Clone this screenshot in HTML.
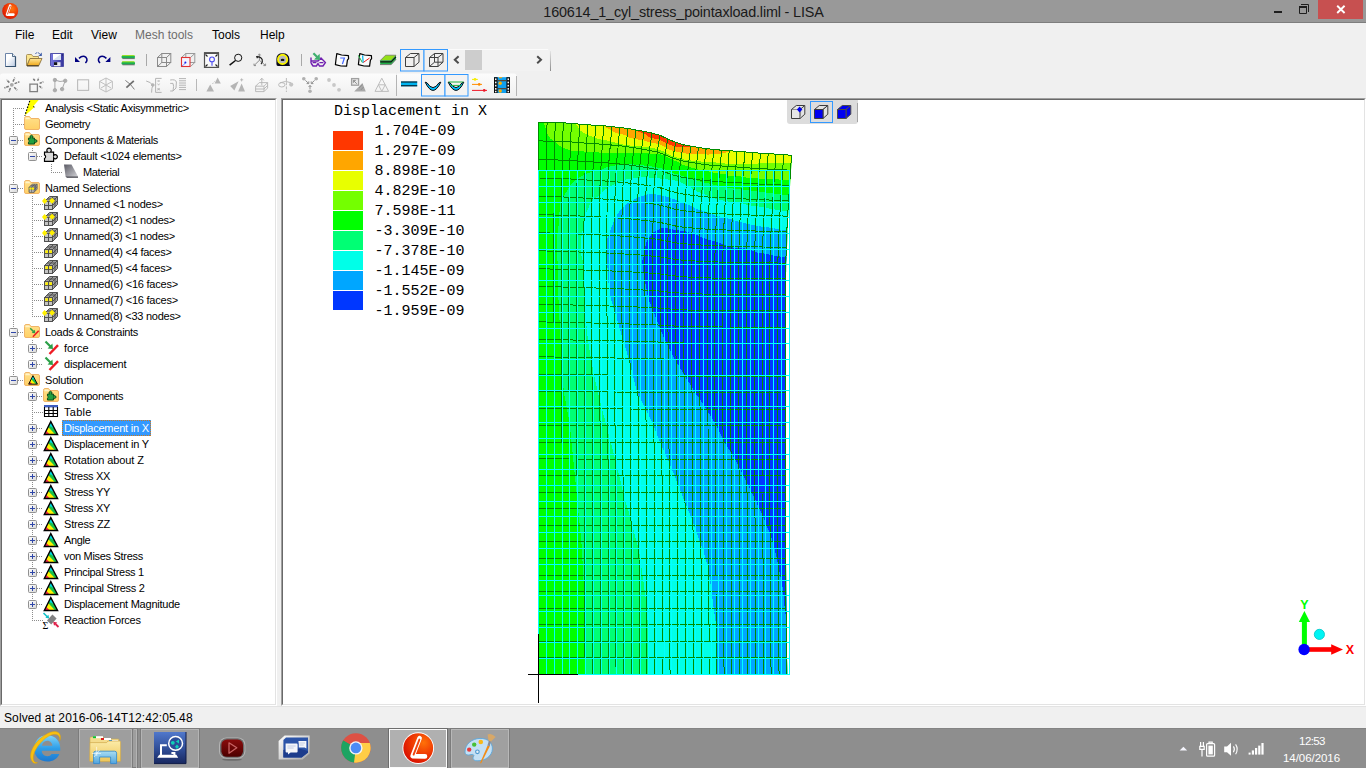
<!DOCTYPE html>
<html>
<head>
<meta charset="utf-8">
<title>LISA</title>
<style>
html,body{margin:0;padding:0;}
body{width:1366px;height:768px;overflow:hidden;background:#F0F0F0;position:relative;font-family:"Liberation Sans",sans-serif;font-size:12px;color:#000;}
.abs{position:absolute;}
#titlebar{left:0;top:0;width:1366px;height:22px;background:#999999;}
#titleline{left:0;top:22px;width:1366px;height:1px;background:#7E7E7E;}
#title{left:0.5px;top:2.5px;width:1366px;text-align:center;font-size:14.4px;letter-spacing:-0.16px;color:#1A1A1A;line-height:18px;white-space:nowrap;}
#closebtn{left:1318px;top:0;width:45px;height:19px;background:#C75050;}
.menu{top:27px;height:16px;line-height:16px;font-size:12px;white-space:nowrap;}
.tree{font-size:11px;line-height:16px;height:16px;white-space:nowrap;color:#000;}
svg{position:absolute;overflow:visible;}
</style>
</head>
<body>
<!-- title bar -->
<div id="titlebar" class="abs"></div>
<div id="titleline" class="abs"></div>
<div id="title" class="abs"><span id="ttxt">160614_1_cyl_stress_pointaxload.liml - LISA</span></div>
<div id="closebtn" class="abs"></div>
<svg style="left:0;top:0" width="1366" height="23" viewBox="0 0 1366 23">
  <defs><radialGradient id="lg" cx="0.62" cy="0.35" r="0.7"><stop offset="0" stop-color="#FF7A10"/><stop offset="0.55" stop-color="#F03A05"/><stop offset="1" stop-color="#D81400"/></radialGradient></defs>
  <circle cx="10.2" cy="11" r="8" fill="url(#lg)"/>
  <path d="M10.2 5.6 L7 14.6 L13.4 14.6" fill="none" stroke="#fff" stroke-width="2.6" stroke-linejoin="round" stroke-linecap="round"/>
  <path d="M10.3 6.2 L7.6 14.0" fill="none" stroke="#E83A10" stroke-width="0.9" stroke-linecap="round"/>
  <rect x="1274" y="11" width="8" height="2" fill="#1E1E1E"/>
  <path d="M1299.5 7 h7 v6.5 h-7 z" fill="none" stroke="#1E1E1E" stroke-width="1"/>
  <rect x="1299" y="6" width="8" height="2" fill="#1E1E1E"/>
  <path d="M1301 4.5 h7.5 v7.5" fill="none" stroke="#1E1E1E" stroke-width="1"/>
  <path d="M1337.2 5.8 L1344.6 13.0 M1344.6 5.8 L1337.2 13.0" stroke="#fff" stroke-width="1.9" fill="none"/>
</svg>
<!-- menu -->
<div class="abs menu" style="left:15px">File</div>
<div class="abs menu" style="left:52px">Edit</div>
<div class="abs menu" style="left:91px">View</div>
<div class="abs menu" style="left:135px;color:#6D6D6D">Mesh tools</div>
<div class="abs menu" style="left:212px">Tools</div>
<div class="abs menu" style="left:260px">Help</div>
<!-- toolbars -->
<svg style="left:0;top:46px" width="560" height="52" viewBox="0 46 560 52">
<defs>
 <linearGradient id="tbg" x1="0" y1="0" x2="0" y2="1"><stop offset="0" stop-color="#FCFCFC"/><stop offset="0.5" stop-color="#F6F6F6"/><stop offset="1" stop-color="#EFEFEF"/></linearGradient>
 <linearGradient id="sepg" x1="0" y1="0" x2="0" y2="1"><stop offset="0" stop-color="#E4E4E4"/><stop offset="1" stop-color="#8C8C8C"/></linearGradient>
 <linearGradient id="pg" x1="0" y1="0" x2="1" y2="1"><stop offset="0.35" stop-color="#FFFFFF"/><stop offset="1" stop-color="#B8C8E0"/></linearGradient>
 <linearGradient id="fo1" x1="0" y1="0" x2="0" y2="1"><stop offset="0" stop-color="#FFE79A"/><stop offset="1" stop-color="#F0A818"/></linearGradient>
 <linearGradient id="sv" x1="0" y1="0" x2="1" y2="0"><stop offset="0" stop-color="#7878E0"/><stop offset="1" stop-color="#34349C"/></linearGradient>
</defs>
<!-- row2 strips -->
<path d="M0 76 Q0 73.5 3 73.5 H396 V97 H0 Z" fill="url(#tbg)"/>
<path d="M397 73.5 H514 Q516.5 73.5 516.5 76 V97 H397 Z" fill="url(#tbg)"/>
<path d="M396.5 75 V96" stroke="#B4B4B4" stroke-width="1" fill="none"/>
<path d="M516.5 76 V96" stroke="#B4B4B4" stroke-width="1" fill="none"/>
<!-- row1 scrollbar area -->
<rect x="448" y="49" width="101" height="22" fill="#F2F2F2"/><rect x="448" y="49" width="100" height="1" fill="#FBFBFB"/>
<rect x="550" y="51" width="1" height="20" fill="url(#sepg)"/>
<rect x="465" y="50" width="17" height="20" fill="#CDCDCD"/>
<path d="M458.6 56.3 L454.8 59.8 L458.6 63.3" stroke="#4C4C4C" stroke-width="2" fill="none"/>
<path d="M537.2 56.3 L541 59.8 L537.2 63.3" stroke="#4C4C4C" stroke-width="2" fill="none"/>
<!-- ===== row 1 icons ===== -->
<!-- new -->
<path d="M5.5 53.5 H12.5 L15.5 56.5 V66.5 H5.5 Z" fill="url(#pg)" stroke="#6C84A8" stroke-width="1"/>
<path d="M15.5 56.5 V66.5 H5.5" fill="none" stroke="#34506E" stroke-width="1.2"/>
<path d="M12.5 53.5 V56.5 H15.5" fill="#E4ECF8" stroke="#34506E" stroke-width="0.8"/>
<!-- open -->
<path d="M26.5 55.5 Q26.5 54.5 27.5 54.5 H31.5 L33 56.5 H38.5 V58.5 H30 L27 65.5 H26.5 Z" fill="#FBE58C" stroke="#A08850" stroke-width="0.9"/>
<path d="M30 58.5 H42 L38.8 65.6 H27 Z" fill="url(#fo1)" stroke="#8C7440" stroke-width="0.9"/>
<path d="M27 65.9 H38.8" stroke="#3C2C10" stroke-width="1"/>
<path d="M35.4 53.6 Q37.8 51.6 40.2 54.2" stroke="#3C5CA8" stroke-width="1" fill="none" stroke-dasharray="2 0.8"/>
<path d="M41.8 52.6 V56 H38.4 Z" fill="#3C5CA8"/>
<!-- save -->
<path d="M50.5 53.5 H63.5 V66.5 H51.5 L50.5 65.5 Z" fill="url(#sv)" stroke="#3C3C9C" stroke-width="0.8"/>
<rect x="53" y="54" width="8" height="6" fill="#FFFFFF"/>
<path d="M53 60 L61 54 V60 Z" fill="#D8E0F0"/>
<rect x="54" y="62.2" width="6.5" height="4" fill="#E8E8F0"/>
<rect x="54" y="62.2" width="3.2" height="2.8" fill="#101018"/>
<rect x="62" y="54.5" width="1" height="1" fill="#20205C"/>
<!-- undo -->
<path d="M75 57 V62 H80 Z" fill="#000080"/>
<path d="M79 58.4 Q82.8 54.6 86 57.4 Q88.2 60 85.4 63" stroke="#000080" stroke-width="1.5" fill="none"/>
<!-- redo -->
<path d="M110.4 57 V62 H105.4 Z" fill="#000080"/>
<path d="M106.4 58.4 Q102.6 54.6 99.4 57.4 Q97.2 60 100 63" stroke="#000080" stroke-width="1.5" fill="none"/>
<!-- green equals -->
<g>
 <rect x="121.5" y="55.2" width="13.5" height="3.4" rx="1.6" fill="#18B050"/>
 <rect x="121.5" y="61.4" width="13.5" height="3.4" rx="1.6" fill="#18B050"/>
 <path d="M122 55.6 H134.5 M122 61.8 H134.5" stroke="#A8E818" stroke-width="0.9"/>
 <path d="M122.5 58.6 H134.8 M122.5 64.8 H134.8" stroke="#5C5C5C" stroke-width="0.8"/>
</g>
<path d="M146.5 54 V66 M301.5 54 V66" stroke="#A8A8A8" stroke-width="1" fill="none"/>
<!-- wire cube gray -->
<g fill="none" stroke="#8A8A8A" stroke-width="1">
 <rect x="157.5" y="57.5" width="9" height="9"/><rect x="161.8" y="53.5" width="9" height="9"/>
 <path d="M157.5 57.5 L161.8 53.5 M166.5 57.5 L170.8 53.5 M157.5 66.5 L161.8 62.5 M166.5 66.5 L170.8 62.5"/>
</g>
<!-- red cube -->
<g fill="none" stroke="#9A9A9A" stroke-width="1">
 <rect x="185.8" y="53.5" width="9" height="9"/>
 <path d="M181.5 57.5 L185.8 53.5 M190.5 57.5 L194.8 53.5 M190.5 66.5 L194.8 62.5"/>
</g>
<rect x="181.5" y="57.5" width="8.5" height="9" fill="#F4F4FF" stroke="#E03434" stroke-width="1.1"/>
<path d="M182.4 65.8 L185.6 62.8" stroke="#2030F0" stroke-width="1" stroke-dasharray="1.2 0.7"/><circle cx="185.4" cy="62.6" r="1" fill="#1020F0"/>
<!-- fit -->
<rect x="204.5" y="53" width="14" height="14.4" fill="#FAFAFA" stroke="#505050" stroke-width="1.2"/>
<rect x="204" y="52.2" width="15" height="1.8" fill="#505050"/>
<path d="M205.5 54.5 l2 2 M217.5 54.5 l-2 2 M205.5 66.5 l2 -2 M217.5 66.5 l-2 -2" stroke="#202020" stroke-width="1.1"/>
<circle cx="212" cy="59.4" r="2.4" fill="none" stroke="#4848F0" stroke-width="1.1"/><path d="M212 61.8 V65.8" stroke="#4848F0" stroke-width="1.1"/>
<!-- zoom -->
<circle cx="238.2" cy="57.8" r="3.6" fill="none" stroke="#101010" stroke-width="1"/>
<path d="M235.5 60.5 L229.6 65.2" stroke="#101010" stroke-width="1.5"/>
<!-- run/axes -->
<g stroke="#8C8C8C" stroke-width="1" fill="none"><path d="M259.4 60.3 V54.2 M259.4 60.3 L254.2 65.4 M259.4 60.3 L265.4 65.4 M258.2 55.4 L259.4 53.8 L260.6 55.4 M254 63.6 V65.6 H256 M263.4 65.6 H265.6 V63.6"/></g>
<path d="M256.6 57 Q260.4 56 262.2 59.6 Q263 62.2 261 64.2" stroke="#202020" stroke-width="1.2" fill="none"/><path d="M256 56 L258.8 56.2 L257 58.8 Z" fill="#202020"/>
<!-- tape -->
<path d="M276.4 59 Q276.4 53.2 282.6 53.2 Q289 53.2 289.4 59 V64 L290 66 H278 Q276.4 66 276.4 64 Z" fill="#08081C"/>
<circle cx="282.6" cy="59.4" r="4.6" fill="#B8B8B8" stroke="#F8F400" stroke-width="1.9"/>
<ellipse cx="282.6" cy="59.9" rx="1.9" ry="1.2" fill="#101010"/>
<!-- glasses -->
<g stroke="#7020B0" stroke-width="1.4" fill="none">
 <path d="M311 57.5 V63 M311 61 H318 L321 58 L325.4 62.6 L323 66 H319.5 L318 63.6 L316.4 66 H313 L311 63"/>
 <path d="M312.6 62.6 H316.4 M319.4 62.6 H323.4"/>
</g>
<path d="M313.4 53.2 L317.4 57.2" stroke="#40B070" stroke-width="2.2" fill="none"/><path d="M320 60 L314 59.4 L319.6 53.8 Z" fill="#40B070"/>
<!-- doc 7 -->
<path d="M336.8 53.6 L341.6 55 L348.4 55.6 L348.6 58.6 L347.4 60.2 L346.6 66.2 L341 66 L335.4 64.6 L336 59.4 Z" fill="#FCFCFC" stroke="#000" stroke-width="1.2" stroke-linejoin="round"/>
<path d="M340.2 58 H344.4 L342.4 64" stroke="#4468FF" stroke-width="1.2" fill="none"/>
<!-- doc axes -->
<path d="M359.8 53.6 L364.6 55 L371.4 55.6 L371.6 58.6 L370.4 60.2 L369.6 66.2 L364 66 L358.4 64.6 L359 59.4 Z" fill="#FCFCFC" stroke="#000" stroke-width="1.2" stroke-linejoin="round"/>
<path d="M358.4 55.4 L362.4 62.6" stroke="#20B040" stroke-width="1"/><path d="M362.6 55.4 L363.2 62.8" stroke="#10B8F0" stroke-width="1.3"/><path d="M363.4 62.4 L369.6 58" stroke="#F02020" stroke-width="1"/>
<!-- slab -->
<path d="M380.2 60.6 L385.6 55.2 H396 L391 60.6 Z" fill="#94E018" stroke="#6C6C6C" stroke-width="0.7"/>
<path d="M380.2 60.6 H391 L396 55.4 V59.6 L391 64.9 H380.2 Z" fill="#20B048"/>
<path d="M380.2 61.9 H391 L396 56.8" stroke="#101010" stroke-width="1.1" fill="none"/>
<path d="M380.2 64.6 H391 L396 59.4" stroke="#7C7C7C" stroke-width="1" fill="none"/>
<!-- toggles row 1 -->
<rect x="400.5" y="49.5" width="23.5" height="21.5" fill="#F1F0EF" stroke="#3399FF" stroke-width="1"/>
<rect x="424" y="49.5" width="23.5" height="21.5" fill="#F1F0EF" stroke="#3399FF" stroke-width="1"/>
<g fill="none" stroke="#404040" stroke-width="1">
 <path d="M405.5 57.5 H414 V66.5 H405.5 Z M405.5 57.5 L410.5 53.5 H419 L414 57.5 M419 53.5 V62.2 L414 66.5"/>
 <path d="M429.5 57.5 H438 V66.5 H429.5 Z M429.5 57.5 L434.5 53.5 H443 L438 57.5 M443 53.5 V62.2 L438 66.5 M434.5 53.5 V62.2 H443 M434.5 62.2 L429.5 66.5"/>
</g>
<!-- ===== row 2 icons (disabled greys) ===== -->
<g stroke="#7C7C7C" stroke-width="1.5" fill="#7C7C7C">
 <circle cx="11.8" cy="84.8" r="1.9" stroke="none" fill="#A8A8A8"/>
 <path d="M13 81.6 L14.8 77.6 M14.6 83.6 L19.4 81.8 M14.2 87.2 L17.2 90.2 M10.4 88 L8.8 92 M8.8 86.2 L4.4 88 M9.4 82.6 L6.6 79.8" fill="none" stroke-dasharray="2.8 0.8"/>
 <path d="M29.9 84.1 H37.4 V91.6 H29.9 Z" fill="none" stroke="#808080" stroke-width="1.3"/>
 <path d="M37.6 80.8 L39 77.6 M35 80.6 L32.6 78.2 M39.6 83.4 L43.4 81.8 M39.4 86 L42.2 88.4" fill="none" stroke-dasharray="2.4 0.9"/>
</g>
<g stroke="#ACACAC" stroke-width="1" fill="#ACACAC">
 <path d="M54.9 90.2 V80 Q60 82.6 65.2 80.8 L62.1 89.1" fill="none"/>
 <circle cx="54.9" cy="80" r="1.7"/><circle cx="65.2" cy="80.8" r="1.7"/><circle cx="54.9" cy="90.2" r="1.7"/><circle cx="62.1" cy="89.1" r="1.7"/>
</g>
<rect x="77.6" y="79.8" width="11" height="10.6" fill="none" stroke="#BCBCBC" stroke-width="1.1"/>
<g stroke="#C0C0C0" stroke-width="1" fill="none">
 <path d="M106 78 L112.4 81.4 V88.6 L106 92 L99.6 88.6 V81.4 Z M106 85 L99.6 81.4 M106 85 L112.4 81.4 M106 85 V92 M106 85 L101 88 M106 85 L111 88 M106 78 V85"/>
</g>
<path d="M125.4 80.4 Q131 84 134.4 89.4" stroke="#707070" stroke-width="0.9" fill="none"/>
<path d="M133.8 80.8 L126.4 87.6" stroke="#707070" stroke-width="1.8" fill="none"/>
<g stroke="#B4B4B4" stroke-width="1" fill="none">
 <path d="M146.2 81 Q151 82 152.8 85.4 M152.8 85.4 Q151.6 88 151.6 92.6"/>
 <circle cx="152.8" cy="85" r="1.3" fill="#B4B4B4"/>
 <path d="M161.6 78.4 H155.6 V92.4 H161.6"/>
 <path d="M157.6 80 l2 2 m0 -2 l-2 2 M157.6 83.6 l1 1.6 l1 -1.6 M157.6 88 l2 2.4 m0 -2.4 l-2 2.4 M157.4 89.2 h2.6" stroke-width="0.8"/>
 <path d="M170.2 80 Q175.6 79 176.4 82 L176 88 L173 91 H170.2 M170.2 83.4 H173 Q174.2 85.6 173 91"/>
 <path d="M179 78.6 H186 M179 80.8 H186 M179 83 H186 M179 85.2 H186 M179 87.4 H186 M179 89.6 H186"/>
</g>
<path d="M196.5 79 V91" stroke="#B8B8B8" stroke-width="1"/>
<g fill="#B4B4B4" stroke="none">
 <path d="M217.6 77.4 L220.8 83.4 H214.6 Z"/><path d="M210.2 84.6 L214 91.6 H206.4 Z"/>
 <path d="M230.2 86 L238.6 81.2 L234.4 90.6 Z"/><path d="M241.6 83.6 L245 91.6 H238.2 Z"/>
</g>
<g stroke="#B4B4B4" stroke-width="0.9" fill="none">
 <path d="M212.4 84 L215.4 80.6" stroke-dasharray="1.2 1"/>
 <path d="M241.6 78.4 V81.4 M240.2 79.8 H243.2"/>
 <path d="M255.6 86.2 L259.2 82.6 H267.6 V88 L264 91.6 H255.6 Z M255.6 86.2 H264 V91.6 M264 86.2 L267.6 82.6 M255.6 89 H264 L267.6 85.4"/>
 <path d="M261.8 85.4 V78.4 M259.8 80.4 L261.8 78.2 L263.8 80.4"/>
 <path d="M286.4 78 V92" stroke-dasharray="3 1.2"/>
 <ellipse cx="281.8" cy="84.8" rx="3.2" ry="2.2"/>
 <path d="M280 82.8 Q286 80 291 82.8"/>
</g>
<circle cx="291.2" cy="84.6" r="2.1" fill="#C4C4C4"/>
<g fill="#B0B0B0"><circle cx="303.8" cy="78.8" r="1.8"/><circle cx="316.2" cy="78.8" r="1.8"/><circle cx="310" cy="91.2" r="1.8"/></g>
<g stroke="#909090" stroke-width="1" fill="none"><path d="M305.4 80.4 L308.6 83.4 M314.6 80.4 L311.4 83.4 M310 89 V85.6 M306.6 83.6 H308.8 V81.4 M313.4 83.6 H311.2 V81.4 M308.6 87 L310 85.4 L311.4 87"/></g>
<g fill="#C8C8C8"><circle cx="329" cy="80" r="1.9"/><circle cx="334" cy="85" r="1.9"/><circle cx="339" cy="89.8" r="1.9"/></g>
<rect x="351.6" y="78.6" width="7" height="6.6" fill="#E8E8E8" stroke="#A0A0A0" stroke-width="1.3"/>
<path d="M353.4 80.4 L356.8 83.8 M353.4 82.8 V80.4 H355.8" stroke="#909090" stroke-width="1" fill="none"/>
<path d="M362.4 83 L365.8 91.6 H354.2 Z" fill="#A8A8A8"/>
<path d="M359 88 L362.6 84.6 M360.8 90 L363.6 87" stroke="#8C8C8C" stroke-width="0.9"/>
<g stroke="#BEBEBE" stroke-width="1" fill="none"><path d="M381.8 78.2 L388.6 91.4 H375 Z M378.4 84.8 H385.2 L381.8 91.4 Z"/></g>
<!-- row 2 right group -->
<rect x="401" y="81.5" width="16.2" height="4.8" fill="#00B4F0"/>
<path d="M401 82 H417.2 M401 85.8 H417.2" stroke="#08080C" stroke-width="1"/>
<rect x="421.5" y="74.5" width="23.5" height="21.5" fill="#F4F3F2" stroke="#3399FF" stroke-width="1"/>
<rect x="445" y="74.5" width="23" height="21.5" fill="#F4F3F2" stroke="#3399FF" stroke-width="1"/>
<path d="M425.2 82.2 Q433 98.6 440.8 82.2 L439 82.8 Q433 92.4 427 82.8 Z" fill="#00C0FF" stroke="#08080C" stroke-width="1" stroke-linejoin="round"/>
<path d="M448.2 82.2 Q456 98.6 463.8 82.2 L462 82.8 Q456 92.4 450 82.8 Z" fill="#00C0FF" stroke="#08080C" stroke-width="1" stroke-linejoin="round"/>
<path d="M448.6 82 H463.4 M450.6 85.4 H461.4" stroke="#20B040" stroke-width="1" fill="none"/>
<path d="M472 79.4 H477.8" stroke="#F0E800" stroke-width="1"/><circle cx="475" cy="79.4" r="1.3" fill="#F8F000"/>
<path d="M472 84.4 H482" stroke="#FF8C00" stroke-width="1"/><circle cx="479.2" cy="84.4" r="1.3" fill="#FF8C00"/>
<path d="M472 90.4 H487" stroke="#F01828" stroke-width="1"/><circle cx="484.2" cy="90.4" r="1.3" fill="#F01828"/>
<rect x="494" y="77.2" width="16" height="15.8" fill="#10A0F0"/>
<rect x="494" y="77.2" width="3.6" height="15.8" fill="#0C0C0C"/><rect x="506.4" y="77.2" width="3.6" height="15.8" fill="#0C0C0C"/>
<path d="M497.6 80.6 H506.4 M497.6 88.6 H506.4" stroke="#584838" stroke-width="1.4"/>
<g fill="#F8F8F8"><rect x="495" y="78.4" width="1.5" height="1.7"/><rect x="495" y="81.6" width="1.5" height="1.7"/><rect x="495" y="84.8" width="1.5" height="1.7"/><rect x="495" y="88" width="1.5" height="1.7"/><rect x="495" y="90.8" width="1.5" height="1.5"/>
<rect x="507.5" y="78.4" width="1.5" height="1.7"/><rect x="507.5" y="81.6" width="1.5" height="1.7"/><rect x="507.5" y="84.8" width="1.5" height="1.7"/><rect x="507.5" y="88" width="1.5" height="1.7"/><rect x="507.5" y="90.8" width="1.5" height="1.5"/></g>
<g fill="#FFB000"><circle cx="500.2" cy="83.2" r="1.7"/><circle cx="500.2" cy="91" r="1.7"/><path d="M499 77.2 h3 v1 h-3 z"/></g>
</svg>
<!-- tree panel frame -->
<div class="abs" style="left:0;top:98px;width:277px;height:608px;background:#fff;box-sizing:border-box;border-top:1px solid #A0A0A0;border-left:1px solid #A0A0A0;border-right:1px solid #fff;border-bottom:1px solid #fff;"></div>
<div class="abs" style="left:1px;top:99px;width:275px;height:606px;background:#fff;box-sizing:border-box;border-top:1px solid #696969;border-left:1px solid #696969;border-right:1px solid #E3E3E3;border-bottom:1px solid #E3E3E3;"></div>
<!-- viewport frame -->
<div class="abs" style="left:281px;top:98px;width:1085px;height:608px;background:#fff;box-sizing:border-box;border-top:1px solid #A0A0A0;border-left:1px solid #A0A0A0;border-right:1px solid #fff;border-bottom:1px solid #fff;"></div>
<div class="abs" style="left:282px;top:99px;width:1083px;height:606px;background:#fff;box-sizing:border-box;border-top:1px solid #696969;border-left:1px solid #696969;border-right:1px solid #E3E3E3;border-bottom:1px solid #E3E3E3;"></div>
<!-- tree -->
<div class="abs" style="left:2px;top:100px;width:273px;height:604px;overflow:hidden">
<svg style="left:-2px;top:-100px" width="277" height="706" viewBox="0 0 277 706">

<defs>
<linearGradient id="gex" x1="0" y1="0" x2="1" y2="1"><stop offset="0" stop-color="#FFFFFF"/><stop offset="1" stop-color="#D6D6D6"/></linearGradient>
<linearGradient id="gfo" x1="0" y1="0" x2="0" y2="1"><stop offset="0" stop-color="#FFE08A"/><stop offset="1" stop-color="#FFD066"/></linearGradient>
<linearGradient id="gwd" x1="0" y1="0" x2="1" y2="1"><stop offset="0" stop-color="#5A5A64"/><stop offset="1" stop-color="#D8D8DC"/></linearGradient>
<g id="exm"><rect x="-4" y="-4" width="8" height="8" rx="1" fill="url(#gex)" stroke="#919191"/><path d="M-2.5 0 H2.5" stroke="#2F47A8" stroke-width="1"/></g>
<g id="exp"><rect x="-4" y="-4" width="8" height="8" rx="1" fill="url(#gex)" stroke="#919191"/><path d="M-2.5 0 H2.5 M0 -2.5 V2.5" stroke="#2F47A8" stroke-width="1"/></g>
<g id="folder"><path d="M0.5 3.5 Q0.5 1.5 2 1.5 H5.5 L7 3.5 H14 Q15.5 3.5 15.5 5 V13 Q15.5 14.5 14 14.5 H2 Q0.5 14.5 0.5 13 Z" fill="url(#gfo)" stroke="#F0B468" stroke-width="1"/><path d="M1.5 2.5 H5 L6.5 4.2 H1.5 Z" fill="#FFF2C8"/></g>
<g id="pz"><path d="M1 4 H3.6 A1.7 1.7 0 1 1 5.4 4 H8 V6.6 A1.6 1.6 0 1 1 8 8.4 V11 H1 V8.8 A1.4 1.4 0 0 0 1 6.2 Z"/></g>
<g id="fpuzzle"><use href="#folder"/><g transform="translate(3.6,3.6) scale(0.86)" fill="#22A040" stroke="#0C4A1A" stroke-width="1.1"><use href="#pz"/></g></g>
<g id="puzzle"><g transform="translate(0.2,1.0) scale(1.3)" fill="#DADADA" stroke="#000" stroke-width="0.9"><use href="#pz"/></g></g>
<g id="wedge"><path d="M2 1.5 H9.5 L16 13.5 V14.8 H5 L3.6 13.5 Z" fill="url(#gwd)"/><path d="M3.6 13.5 H16 V14.8 H5 Z" fill="#4A4A52"/></g>
<g id="cube">
 <path d="M1.5 6.5 L6.5 1.5 H14.5 V9.5 L9.5 14.5 H1.5 Z" fill="#A0A0A0" stroke="#505050" stroke-width="1"/>
 <rect x="1.5" y="6.5" width="8" height="8" fill="#C4C4C4" stroke="#505050"/>
 <path d="M5.5 6.5 V14.5 M1.5 10.5 H9.5 M9.5 6.5 L14.5 1.5 M5.5 6.5 L10.5 1.5 M4 4 H12 M12 4 V12 M9.5 10.5 L14.5 5.5" stroke="#505050" stroke-width="1" fill="none"/>
</g>
<g id="cuben"><use href="#cube"/><path d="M1.5 3 L4.5 6 L1.5 9 L-1 6 Z M9 2.8 L12 5.8 L9 8.8 L6 5.8 Z" fill="#FFF000"/></g>
<g id="cubef"><use href="#cube"/><rect x="2.3" y="7.3" width="2.6" height="2.8" fill="#FFF000"/><rect x="6.3" y="7.3" width="2.6" height="2.8" fill="#FFF000"/></g>
<g id="fgrid"><use href="#folder"/><g transform="translate(4.2,4.2) scale(0.62)"><use href="#cube"/><rect x="2" y="7" width="3.4" height="3.4" fill="#FFF000"/><rect x="6" y="7" width="3.4" height="3.4" fill="#FFF000"/></g></g>
<g id="ldarrow"><path d="M2.5 2.5 L7.5 7.5" stroke="#2CA048" stroke-width="2.2" fill="none"/><path d="M10 10 L4.6 9.4 L9.4 4.6 Z" fill="#2CA048"/></g>
<g id="load"><use href="#ldarrow"/><path d="M6.5 15 L15 6.2" stroke="#EE1C24" stroke-width="2.4" fill="none"/></g>
<g id="fload"><use href="#folder"/><g transform="translate(4.5,3.5) scale(0.68)"><use href="#load"/></g></g>
<clipPath id="tric"><path d="M7.8 2 L14.4 14.2 H1.5 Z"/></clipPath>
<g id="tri">
 <g clip-path="url(#tric)">
  <rect x="0" y="0" width="16" height="16" fill="#00D8E0"/>
  <path d="M0 3.1 L16 10.4 V16 H0 Z" fill="#18C048"/>
  <path d="M0 1.7 L14 16.3 H0 Z" fill="#FFF200"/>
  <path d="M0 7.9 L9 16.4 H0 Z" fill="#F02848"/>
 </g>
 <path d="M7.8 1.6 L14.6 14.5 H1.3 Z" fill="none" stroke="#000" stroke-width="1.4" stroke-linejoin="miter"/>
</g>
<g id="fsol"><use href="#folder"/><g transform="translate(3.8,3.6) scale(0.66)"><use href="#tri"/></g></g>
<g id="table"><rect x="1" y="2" width="14" height="11" fill="#fff"/><rect x="1" y="2" width="14" height="2.4" fill="#3C5CC0"/><path d="M1.5 4 V13.5 H14.5 V4 M1 7.5 H15 M1 10.5 H15 M5.8 4 V13.5 M10.2 4 V13.5" stroke="#000" stroke-width="1.1" fill="none"/></g>
<g id="react"><path d="M0.5 1 L4.5 5" stroke="#10C0C8" stroke-width="1.6"/><path d="M6.2 6.6 L2.4 5.8 L5.4 2.8 Z" fill="#10C0C8"/><path d="M9.4 2.6 L13.6 6.4 L8.2 12.4 L4 8.6 Z" fill="#828282"/><path d="M15.5 15 L12.5 12" stroke="#E0204A" stroke-width="1.8"/><path d="M10.2 9.8 L14.2 10.6 L11 13.8 Z" fill="#E0204A"/><text x="-0.5" y="16.5" font-family="Liberation Serif" font-size="10" fill="#000">&#931;</text></g>
<g id="bolt"><path d="M6.7 -1 H16.4 L9 7.5 L10.6 8.1 L0.8 16.8 Z" fill="#FFFF00"/><path d="M6.7 -1 L0.8 16.8" stroke="#000" stroke-width="1.2" stroke-dasharray="1.6 1.4" fill="none"/><path d="M9 7.5 L10.6 8.1" stroke="#000" stroke-width="0.8"/></g>
</defs>

<path d="M13.5 108 V380M13 108.5 H24M13 124.5 H24M18 140.5 H24M37 156.5 H43M51 172.5 H62M18 188.5 H24M32 204.5 H43M32 220.5 H43M32 236.5 H43M32 252.5 H43M32 268.5 H43M32 284.5 H43M32 300.5 H43M32 316.5 H43M18 332.5 H24M37 348.5 H43M37 364.5 H43M18 380.5 H24M37 396.5 H43M32 412.5 H43M37 428.5 H43M37 444.5 H43M37 460.5 H43M37 476.5 H43M37 492.5 H43M37 508.5 H43M37 524.5 H43M37 540.5 H43M37 556.5 H43M37 572.5 H43M37 588.5 H43M37 604.5 H43M32 620.5 H43M32.5 148 V152M51.5 164 V172M32.5 196 V316M32.5 340 V360M32.5 388 V620" stroke="#8C8C8C" stroke-width="1" stroke-dasharray="1 1" fill="none" shape-rendering="crispEdges"/>
<rect x="62" y="420" width="89" height="16" fill="#3399FF"/>
<rect x="62.5" y="420.5" width="88" height="15" fill="none" stroke="#D07818" stroke-width="1" stroke-dasharray="1 1" shape-rendering="crispEdges"/>
<use href="#bolt" x="24" y="99"/>
<use href="#folder" x="24" y="115"/>
<use href="#exm" x="13.5" y="140.5"/>
<use href="#fpuzzle" x="24" y="131"/>
<use href="#exm" x="32.5" y="156.5"/>
<use href="#puzzle" x="43" y="146"/>
<use href="#wedge" x="62" y="163"/>
<use href="#exm" x="13.5" y="188.5"/>
<use href="#fgrid" x="24" y="179"/>
<use href="#cuben" x="43" y="195"/>
<use href="#cuben" x="43" y="211"/>
<use href="#cuben" x="43" y="227"/>
<use href="#cubef" x="43" y="243"/>
<use href="#cubef" x="43" y="259"/>
<use href="#cubef" x="43" y="275"/>
<use href="#cubef" x="43" y="291"/>
<use href="#cuben" x="43" y="307"/>
<use href="#exm" x="13.5" y="332.5"/>
<use href="#fload" x="24" y="323"/>
<use href="#exp" x="32.5" y="348.5"/>
<use href="#load" x="43" y="339"/>
<use href="#exp" x="32.5" y="364.5"/>
<use href="#load" x="43" y="355"/>
<use href="#exm" x="13.5" y="380.5"/>
<use href="#fsol" x="24" y="371"/>
<use href="#exp" x="32.5" y="396.5"/>
<use href="#fpuzzle" x="43" y="387"/>
<use href="#table" x="43" y="403"/>
<use href="#exp" x="32.5" y="428.5"/>
<use href="#tri" x="43" y="420"/>
<use href="#exp" x="32.5" y="444.5"/>
<use href="#tri" x="43" y="436"/>
<use href="#exp" x="32.5" y="460.5"/>
<use href="#tri" x="43" y="452"/>
<use href="#exp" x="32.5" y="476.5"/>
<use href="#tri" x="43" y="468"/>
<use href="#exp" x="32.5" y="492.5"/>
<use href="#tri" x="43" y="484"/>
<use href="#exp" x="32.5" y="508.5"/>
<use href="#tri" x="43" y="500"/>
<use href="#exp" x="32.5" y="524.5"/>
<use href="#tri" x="43" y="516"/>
<use href="#exp" x="32.5" y="540.5"/>
<use href="#tri" x="43" y="532"/>
<use href="#exp" x="32.5" y="556.5"/>
<use href="#tri" x="43" y="548"/>
<use href="#exp" x="32.5" y="572.5"/>
<use href="#tri" x="43" y="564"/>
<use href="#exp" x="32.5" y="588.5"/>
<use href="#tri" x="43" y="580"/>
<use href="#exp" x="32.5" y="604.5"/>
<use href="#tri" x="43" y="596"/>
<use href="#react" x="43" y="612"/>
</svg>
<div class="abs tree" style="left:43px;top:0px;letter-spacing:-0.281px"><span id="t0">Analysis &lt;Static Axisymmetric&gt;</span></div>
<div class="abs tree" style="left:43px;top:16px;letter-spacing:-0.400px"><span id="t1">Geometry</span></div>
<div class="abs tree" style="left:43px;top:32px;letter-spacing:-0.343px"><span id="t2">Components &amp; Materials</span></div>
<div class="abs tree" style="left:62px;top:48px;letter-spacing:-0.223px"><span id="t3">Default &lt;1024 elements&gt;</span></div>
<div class="abs tree" style="left:81px;top:64px;letter-spacing:-0.341px"><span id="t4">Material</span></div>
<div class="abs tree" style="left:43px;top:80px;letter-spacing:-0.211px"><span id="t5">Named Selections</span></div>
<div class="abs tree" style="left:62px;top:96px;letter-spacing:-0.226px"><span id="t6">Unnamed &lt;1 nodes&gt;</span></div>
<div class="abs tree" style="left:62px;top:112px;letter-spacing:-0.264px"><span id="t7">Unnamed(2) &lt;1 nodes&gt;</span></div>
<div class="abs tree" style="left:62px;top:128px;letter-spacing:-0.264px"><span id="t8">Unnamed(3) &lt;1 nodes&gt;</span></div>
<div class="abs tree" style="left:62px;top:144px;letter-spacing:-0.241px"><span id="t9">Unnamed(4) &lt;4 faces&gt;</span></div>
<div class="abs tree" style="left:62px;top:160px;letter-spacing:-0.241px"><span id="t10">Unnamed(5) &lt;4 faces&gt;</span></div>
<div class="abs tree" style="left:62px;top:176px;letter-spacing:-0.226px"><span id="t11">Unnamed(6) &lt;16 faces&gt;</span></div>
<div class="abs tree" style="left:62px;top:192px;letter-spacing:-0.226px"><span id="t12">Unnamed(7) &lt;16 faces&gt;</span></div>
<div class="abs tree" style="left:62px;top:208px;letter-spacing:-0.263px"><span id="t13">Unnamed(8) &lt;33 nodes&gt;</span></div>
<div class="abs tree" style="left:43px;top:224px;letter-spacing:-0.319px"><span id="t14">Loads &amp; Constraints</span></div>
<div class="abs tree" style="left:62px;top:240px;letter-spacing:0.066px"><span id="t15">force</span></div>
<div class="abs tree" style="left:62px;top:256px;letter-spacing:-0.211px"><span id="t16">displacement</span></div>
<div class="abs tree" style="left:43px;top:272px;letter-spacing:-0.208px"><span id="t17">Solution</span></div>
<div class="abs tree" style="left:62px;top:288px;letter-spacing:-0.307px"><span id="t18">Components</span></div>
<div class="abs tree" style="left:62px;top:304px;letter-spacing:0.261px"><span id="t19">Table</span></div>
<div class="abs tree" style="left:62px;top:320px;letter-spacing:-0.227px;color:#fff"><span id="t20">Displacement in X</span></div>
<div class="abs tree" style="left:62px;top:336px;letter-spacing:-0.215px"><span id="t21">Displacement in Y</span></div>
<div class="abs tree" style="left:62px;top:352px;letter-spacing:-0.096px"><span id="t22">Rotation about Z</span></div>
<div class="abs tree" style="left:62px;top:368px;letter-spacing:-0.323px"><span id="t23">Stress XX</span></div>
<div class="abs tree" style="left:62px;top:384px;letter-spacing:-0.302px"><span id="t24">Stress YY</span></div>
<div class="abs tree" style="left:62px;top:400px;letter-spacing:-0.323px"><span id="t25">Stress XY</span></div>
<div class="abs tree" style="left:62px;top:416px;letter-spacing:-0.186px"><span id="t26">Stress ZZ</span></div>
<div class="abs tree" style="left:62px;top:432px;letter-spacing:-0.348px"><span id="t27">Angle</span></div>
<div class="abs tree" style="left:62px;top:448px;letter-spacing:-0.303px"><span id="t28">von Mises Stress</span></div>
<div class="abs tree" style="left:62px;top:464px;letter-spacing:-0.322px"><span id="t29">Principal Stress 1</span></div>
<div class="abs tree" style="left:62px;top:480px;letter-spacing:-0.277px"><span id="t30">Principal Stress 2</span></div>
<div class="abs tree" style="left:62px;top:496px;letter-spacing:-0.231px"><span id="t31">Displacement Magnitude</span></div>
<div class="abs tree" style="left:62px;top:512px;letter-spacing:-0.220px"><span id="t32">Reaction Forces</span></div>
</div>
<!-- legend -->
<style>
.lg{font-family:"Liberation Mono",monospace;font-size:15px;line-height:16px;height:16px;white-space:pre;color:#000;}
.lb{left:333px;width:30px;height:19px;}
</style>
<div class="abs lg" id="lgt" style="left:334px;top:104px">Displacement in X</div>
<div class="abs lb" style="top:131px;background:#FF3700"></div>
<div class="abs lb" style="top:151px;background:#FFA600"></div>
<div class="abs lb" style="top:171px;background:#E8FF00"></div>
<div class="abs lb" style="top:191px;background:#74FF00"></div>
<div class="abs lb" style="top:211px;background:#00FF00"></div>
<div class="abs lb" style="top:231px;background:#00FF74"></div>
<div class="abs lb" style="top:251px;background:#00FFE8"></div>
<div class="abs lb" style="top:271px;background:#00A6FF"></div>
<div class="abs lb" style="top:291px;background:#0037FF"></div>
<div class="abs lg" style="left:374.5px;top:123.5px">1.704E-09</div>
<div class="abs lg" style="left:374.5px;top:143.5px">1.297E-09</div>
<div class="abs lg" style="left:374.5px;top:163.5px">8.898E-10</div>
<div class="abs lg" style="left:374.5px;top:183.5px">4.829E-10</div>
<div class="abs lg" style="left:374.5px;top:203.5px">7.598E-11</div>
<div class="abs lg" style="left:374.5px;top:223.5px">-3.309E-10</div>
<div class="abs lg" style="left:374.5px;top:243.5px">-7.378E-10</div>
<div class="abs lg" style="left:374.5px;top:263.5px">-1.145E-09</div>
<div class="abs lg" style="left:374.5px;top:283.5px">-1.552E-09</div>
<div class="abs lg" style="left:374.5px;top:303.5px">-1.959E-09</div>
<svg style="left:520px;top:100px" width="300" height="600" viewBox="520 100 300 600" shape-rendering="crispEdges">
<defs><clipPath id="oc"><polygon points="538,675 538,657.9 538,641.3 538,624.8 538,608.2 538,591.6 538,575 538,558.4 538,541.9 538,525.3 538,508.7 538,492.1 538,475.5 538,458.9 538,442.2 538,425.3 538,408.4 538,391.3 538,374.1 538,356.8 538,339.4 538,321.9 538,304.3 538,286.6 538,268.8 538,250.8 538,232.8 538,214.6 538,196.4 538,178 538,159.5 538,140.9 538,122.2 538.5,122.2 547.1,122.4 555.2,122.6 563.1,122.9 571.2,123.2 579.7,124.2 587.8,124.8 595.7,125.3 603.8,125.8 611.9,126.7 619.8,127.4 627.8,128.5 635.9,129.9 644.1,131.4 652,133.1 659.9,135.3 667.7,138.9 675.6,142.3 683.2,144.7 690.9,146.1 698.4,147.4 706.1,148.6 713.9,149.5 721.6,150.2 729.2,150.7 736.9,151.3 744.7,151.9 752.5,152.6 760.4,153.2 768.2,153.7 776,154.1 783.8,154.6 791.5,155.3 792,155.3 791,170.3 790.1,185.5 789.1,200.8 788.1,216.2 787.3,231.7 787,247.4 786.1,263.1 786,279 786,294.9 786,311 786,327.1 786,343.4 786,359.7 786,376.1 786,392.6 786,409.2 786,425.8 786,442.4 786,459 786,475.5 786,492.1 786,508.7 786,525.3 786,541.9 786,558.4 786.1,575 786.2,591.6 786.4,608.2 787,624.8 787,641.3 787,657.9 787.4,675"/></clipPath></defs>
<g clip-path="url(#oc)">
<rect x="530" y="110" width="270" height="570" fill="#00FF00"/>
<polygon fill="#00FF74" points="585,680 585,674 584.8,625 583.8,587.5 582,550 581,537 579,518.5 577.2,499.8 575.4,481 573.5,462 571.6,443.5 569.8,424.8 566.5,406 564,393 562.3,374.5 561.3,356 560.4,337 559.4,318 558.5,299.5 557.6,262 556.6,252 556.6,241 557.6,232.5 559,222 559.4,212.8 560.4,202.5 563.2,197 567,191 569.5,186 573.5,181.5 577.3,178.5 584.8,174.3 592.3,171.9 601.6,169.6 607.3,167 615.7,165.4 629.8,164.2 639,164.9 648.5,166 656,167.2 664,169 667.8,171 673.4,173.3 682.8,176 692,179 701.5,181.8 710.9,184 720.3,186.3 729.6,188.2 743.7,189.6 757.8,191.3 767.2,192.7 776.5,194 788.7,195.5 800,196 800,680"/>
<polygon fill="#00FFE8" points="648.5,680 648.5,674 648.5,634.4 646.6,606 643,578 639,550 635.4,537.2 630.7,518.5 625,499.8 620.4,481 615.7,462.2 611,443.5 606.3,424.8 601.2,406 597.9,393 594,374.5 590.4,355.8 587.6,337 585.7,318 584.8,299.5 583.8,280.8 582.9,262 580.5,252 581,238 583,228.8 584.8,219.4 586.6,212 590.4,203.4 594,198.8 600,195 603.5,191 607.2,188 615.7,183.6 624.1,179.9 634.5,178 643.8,177.2 653.2,177.8 664,179 671,179.8 678,181 687.4,185.6 696.8,191.3 706.2,195 715.6,198.8 725,201 734.3,202.5 743.7,204 753,205.8 762.5,207.2 771.8,209 781.2,210.5 788.7,211 800,211.5 800,680"/>
<polygon fill="#00A6FF" points="717,680 717,674 717,653 716,625 712.2,597 708.5,568.8 703,550 698.2,537.2 691.6,518.5 684,499.8 676.6,481 669,462.2 660.7,443.5 653.2,424.8 644,406 637.2,393 632.6,374.5 627.9,355.8 622.2,337 616.6,318 611,299.5 608.2,280.8 607.2,262 605.9,252 606.3,243.8 608,236 611,228.8 613.8,221 616.6,215.6 620.4,210 626,204.4 633.5,199.7 639,197 648.5,194 656,194.5 664,196 669.6,197.8 678,200.6 687.4,204.4 696.8,209 706.2,211.9 715.6,215.6 725,217.5 734.3,220.3 743.7,223.1 753,225 762.5,226.9 771.8,227.8 781.2,229.7 786.8,230.6 800,231.5 800,680"/>
<polygon fill="#0037FF" points="800,614 785.4,613.8 784.5,606 782.6,587.5 778.8,568.8 775,550 771.3,537.2 763.8,518.5 755.4,499.8 746,481 736.6,462.2 725.4,443.5 716,424.8 704.5,406 695.4,393 684,374.5 672.9,355.8 663.5,337 656,318 648.5,299.5 644.8,280.8 642,262 644.8,252 645.7,243.8 648.5,238 653,232.5 658,229.7 664,227.5 673.4,229.7 686.5,231.6 695,234.4 701.5,237.2 709,240 716.5,241.9 724,244.7 733.4,247.5 748.4,248.8 755,252.2 767,254 776.5,256 786,257.3 800,258"/>
<polygon fill="#74FF00" points="543,110 543,121.7 545.4,127.4 546.8,133 550,138.2 553.8,141 561.3,147 569.8,150.4 584.8,151.6 601.6,152.7 615.7,153.4 629.8,153.2 643.8,153.2 656,153.8 664,155 668.7,157.9 673.4,160.2 678,162 682.8,164.9 692,167.7 701.5,170.5 709,171.5 716.5,173.3 725,174.3 729.6,176 739,176 748.4,178 757.8,178.5 767,179 776.5,179.4 786,179.9 790.6,180.4 800,181 800,110"/>
<polygon fill="#E8FF00" points="573.5,110 573.5,122.7 577.3,125.5 580,130.2 585.7,134 592.3,136.8 597.9,139 607.3,140.5 616.6,142.8 626,145.2 635.4,146 643.8,146.6 653.2,148 664,151.3 669.6,155 673.4,156.4 682.8,159.3 692,160.7 701.5,161.6 710.9,162 720.3,163 729.6,164 739,164 748.4,164 757.8,163.5 767,163 776.5,162.8 791.7,162.8 800,162.8 800,110"/>
<polygon fill="#FFA600" points="603.5,110 603.5,125.5 607.3,128.3 611,130.2 615.7,133 620.4,134 626,135.3 629.8,137.7 635.4,139 643.8,140.5 651.3,142.8 658,143.8 664,146.5 667.8,149 673.4,150.8 682.8,153.2 692,154.1 701.5,154.1 708,154.6 713.7,154.1 720.3,153.6 727.8,152.2 729.6,150.8 730,110"/>
<polygon fill="#FF3700" points="635.4,110 635.4,129.7 639,132 643.8,133 648.5,136.8 652.3,138.2 658,139 664,141.9 667.8,144.2 673.4,146 676.2,147 682.8,147.5 688.4,147.2 695,146.7 695.5,110"/>
</g>
<path fill="none" stroke="#008C00" stroke-width="1" d="M538.5 674.5 L546.3 674.5 L554.2 674.5 L562 674.5 L569.9 674.5 L577.6 674.5 L585.1 674.5 L592.6 674.5 L600.4 674.5 L608.2 674.5 L616.1 674.5 L623.9 674.5 L631.8 674.5 L639.5 674.5 L647 674.5 L654.5 674.5 L662.3 674.5 L670.1 674.5 L678 674.5 L685.8 674.5 L693.6 674.5 L701.5 674.5 L709.3 674.5 L716.7 674.5 L724.2 674.5 L732 674.5 L739.8 674.5 L747.7 674.5 L755.5 674.5 L763.4 674.5 L771.2 674.5 L779.1 674.5 L786.9 674.5M538.5 657.9 L546.3 657.9 L554.2 657.9 L562 657.9 L569.9 657.9 L577.6 657.9 L585 657.9 L592.5 657.9 L600.2 657.9 L608.1 657.9 L615.9 657.9 L623.8 657.9 L631.6 657.9 L639.4 657.9 L646.8 657.9 L654.2 657.9 L662 657.9 L669.8 657.9 L677.7 657.9 L685.5 657.9 L693.4 657.9 L701.2 657.9 L709 657.9 L716.4 657.9 L723.8 657.9 L731.6 657.9 L739.4 657.9 L747.3 657.9 L755.1 657.9 L763 657.9 L770.8 657.9 L778.6 657.9 L786.5 657.9M538.5 641.3 L546.3 641.3 L554.2 641.3 L562 641.3 L569.9 641.3 L577.6 641.3 L584.9 641.3 L592.4 641.3 L600.2 641.3 L608.1 641.3 L615.9 641.3 L623.8 641.3 L631.6 641.3 L639.4 641.3 L646.8 641.3 L654.2 641.3 L662 641.3 L669.8 641.3 L677.7 641.3 L685.5 641.3 L693.4 641.3 L701.2 641.3 L709 641.3 L716.4 641.3 L723.8 641.3 L731.6 641.3 L739.4 641.3 L747.3 641.3 L755.1 641.3 L763 641.3 L770.8 641.3 L778.6 641.3 L786.5 641.3M538.5 624.8 L546.3 624.8 L554.2 624.8 L562 624.8 L569.9 624.8 L577.6 624.8 L584.9 624.8 L592.4 624.8 L600.2 624.8 L608.1 624.8 L615.9 624.8 L623.8 624.8 L631.6 624.8 L639.4 624.8 L646.8 624.8 L654.2 624.8 L662 624.8 L669.8 624.8 L677.7 624.8 L685.5 624.8 L693.4 624.8 L701.2 624.8 L709 624.8 L716.3 624.8 L723.8 624.8 L731.6 624.8 L739.4 624.8 L747.3 624.8 L755.1 624.8 L763 624.8 L770.8 624.8 L778.6 624.8 L786.5 624.8M538.5 608.2 L546.3 608.2 L554.2 608.2 L562 608.2 L569.9 608.2 L577.6 608.2 L584.9 608.2 L592.4 608.2 L600.2 608.2 L608.1 608.2 L615.9 608.2 L623.8 608.2 L631.6 608.2 L639.4 608.2 L646.7 608.2 L654.2 608.2 L662 608.2 L669.8 608.2 L677.7 608.2 L685.5 608.2 L693.4 608.2 L701.2 608.2 L708.8 608.2 L716.2 608.2 L723.8 608.2 L731.6 608.2 L739.4 608.2 L747.3 608.2 L755.1 608.2 L763 608.2 L770.8 608.2 L778.5 608.2 L785.9 608.2M538.5 591.6 L546.3 591.6 L554.2 591.6 L562 591.6 L569.9 591.6 L577.5 591.6 L584.9 591.6 L592.4 591.6 L600.2 591.6 L608.1 591.6 L615.9 591.6 L623.8 591.6 L631.6 591.6 L639.3 591.6 L646.6 591.6 L654.2 591.6 L662 591.6 L669.8 591.6 L677.7 591.6 L685.5 591.6 L693.4 591.6 L701.2 591.6 L708.7 591.6 L716 591.6 L723.7 591.6 L731.6 591.6 L739.4 591.6 L747.3 591.6 L755.1 591.6 L763 591.6 L770.8 591.6 L778.5 591.6 L785.7 591.6M538.5 575 L546.3 575 L554.2 575 L562 575 L569.9 575 L577.5 575 L584.9 575 L592.4 575 L600.2 575 L608.1 575 L615.9 575 L623.8 575 L631.6 575 L639.2 575 L646.5 575 L654.2 575 L662 575 L669.8 575 L677.7 575 L685.5 575 L693.4 575 L701.1 575 L708.5 575 L716 575 L723.7 575 L731.6 575 L739.4 575 L747.3 575 L755.1 575 L763 575 L770.8 575 L778.2 575 L785.6 575M538.5 558.4 L546.3 558.4 L554.2 558.4 L562 558.4 L569.9 558.4 L577.5 558.4 L584.8 558.4 L592.4 558.4 L600.2 558.4 L608.1 558.4 L615.9 558.4 L623.8 558.4 L631.5 558.4 L639 558.4 L646.4 558.4 L654.2 558.4 L662 558.4 L669.8 558.4 L677.7 558.4 L685.5 558.4 L693.4 558.4 L701 558.4 L708.3 558.4 L715.9 558.4 L723.7 558.4 L731.6 558.4 L739.4 558.4 L747.3 558.4 L755.1 558.4 L763 558.4 L770.6 558.4 L778 558.4 L785.5 558.4M538.5 541.9 L546.3 541.9 L554.2 541.9 L562 541.9 L569.8 541.9 L577.5 541.9 L584.7 541.9 L592.4 541.9 L600.2 541.9 L608.1 541.9 L615.9 541.9 L623.8 541.9 L631.4 541.9 L638.7 541.9 L646.3 541.9 L654.2 541.9 L662 541.9 L669.8 541.9 L677.7 541.9 L685.5 541.9 L693.3 541.9 L700.6 541.9 L708.1 541.9 L715.9 541.9 L723.7 541.9 L731.6 541.9 L739.4 541.9 L747.3 541.9 L755.1 541.9 L762.9 541.9 L770.5 541.9 L777.8 541.9 L785.5 541.9M538.5 525.3 L546.3 525.3 L554.2 525.3 L562 525.3 L569.8 525.3 L577.4 525.3 L584.7 525.3 L592.4 525.3 L600.2 525.3 L608.1 525.3 L615.9 525.3 L623.7 525.3 L631.1 525.3 L638.5 525.3 L646.3 525.3 L654.2 525.3 L662 525.3 L669.8 525.3 L677.7 525.3 L685.5 525.3 L692.9 525.3 L700.3 525.3 L708.1 525.3 L715.9 525.3 L723.7 525.3 L731.6 525.3 L739.4 525.3 L747.3 525.3 L755.1 525.3 L762.6 525.3 L770 525.3 L777.7 525.3 L785.5 525.3M538.5 508.7 L546.3 508.7 L554.2 508.7 L562 508.7 L569.8 508.7 L577.2 508.7 L584.6 508.7 L592.4 508.7 L600.2 508.7 L608.1 508.7 L615.9 508.7 L623.5 508.7 L630.8 508.7 L638.5 508.7 L646.3 508.7 L654.2 508.7 L662 508.7 L669.8 508.7 L677.6 508.7 L685.2 508.7 L692.5 508.7 L700.2 508.7 L708.1 508.7 L715.9 508.7 L723.7 508.7 L731.6 508.7 L739.4 508.7 L747.3 508.7 L754.9 508.7 L762.2 508.7 L769.8 508.7 L777.7 508.7 L785.5 508.7M538.5 492.1 L546.3 492.1 L554.2 492.1 L562 492.1 L569.7 492.1 L577.1 492.1 L584.6 492.1 L592.4 492.1 L600.2 492.1 L608.1 492.1 L615.8 492.1 L623.2 492.1 L630.7 492.1 L638.5 492.1 L646.3 492.1 L654.2 492.1 L662 492.1 L669.8 492.1 L677.4 492.1 L684.7 492.1 L692.4 492.1 L700.2 492.1 L708.1 492.1 L715.9 492.1 L723.7 492.1 L731.6 492.1 L739.4 492.1 L747 492.1 L754.4 492.1 L762 492.1 L769.8 492.1 L777.7 492.1 L785.5 492.1M538.5 475.5 L546.3 475.5 L554.2 475.5 L562 475.5 L569.6 475.5 L577 475.5 L584.6 475.5 L592.4 475.5 L600.2 475.5 L608.1 475.5 L615.6 475.5 L623 475.5 L630.6 475.5 L638.5 475.5 L646.3 475.5 L654.2 475.5 L662 475.5 L669.6 475.5 L677 475.5 L684.5 475.5 L692.4 475.5 L700.2 475.5 L708.1 475.5 L715.9 475.5 L723.7 475.5 L731.6 475.5 L739.2 475.5 L746.5 475.5 L754.1 475.5 L762 475.5 L769.8 475.5 L777.7 475.5 L785.5 475.5M538.5 458.9 L546.3 458.9 L554.2 458.9 L562 458.9 L569.6 459 L576.9 459 L584.6 459 L592.4 459 L600.2 459 L608 459 L615.4 459 L622.8 459 L630.6 459 L638.5 459 L646.3 459 L654.1 459 L661.8 459 L669.2 459 L676.7 459 L684.5 459 L692.4 459 L700.2 459 L708.1 459 L715.9 459 L723.7 459 L731.3 459 L738.6 459 L746.3 459 L754.1 459 L762 459 L769.8 459 L777.7 459 L785.5 459M538.5 442.2 L546.3 442.2 L554.2 442.2 L562 442.3 L569.5 442.3 L576.8 442.3 L584.6 442.3 L592.4 442.3 L600.2 442.3 L607.7 442.4 L615.1 442.4 L622.8 442.4 L630.6 442.4 L638.5 442.4 L646.3 442.4 L654 442.4 L661.4 442.4 L668.9 442.4 L676.7 442.4 L684.5 442.4 L692.4 442.4 L700.2 442.4 L708.1 442.4 L715.8 442.4 L723.3 442.4 L730.7 442.4 L738.4 442.4 L746.3 442.4 L754.1 442.4 L762 442.4 L769.8 442.4 L777.7 442.4 L785.5 442.4M538.5 425.3 L546.3 425.4 L554.2 425.4 L561.9 425.4 L569.3 425.5 L576.8 425.5 L584.6 425.6 L592.4 425.6 L600.1 425.6 L607.5 425.7 L615 425.7 L622.8 425.7 L630.6 425.7 L638.5 425.8 L646.2 425.8 L653.6 425.8 L661.1 425.8 L668.8 425.8 L676.7 425.8 L684.5 425.8 L692.4 425.8 L700.2 425.8 L708 425.8 L715.5 425.8 L722.9 425.8 L730.6 425.8 L738.4 425.8 L746.3 425.8 L754.1 425.8 L762 425.8 L769.8 425.8 L777.7 425.8 L785.5 425.8M538.5 408.4 L546.3 408.4 L554.2 408.5 L561.8 408.5 L569.2 408.6 L576.7 408.7 L584.6 408.7 L592.4 408.8 L599.8 408.8 L607.2 408.9 L614.9 408.9 L622.8 409 L630.6 409 L638.4 409.1 L645.7 409.1 L653.2 409.1 L661 409.2 L668.8 409.2 L676.7 409.2 L684.5 409.2 L692.4 409.2 L700.1 409.2 L707.5 409.2 L715 409.2 L722.8 409.2 L730.6 409.2 L738.4 409.2 L746.3 409.2 L754.1 409.2 L762 409.2 L769.8 409.2 L777.7 409.2 L785.5 409.2M538.5 391.3 L546.3 391.4 L554.1 391.4 L561.6 391.5 L569 391.6 L576.7 391.7 L584.5 391.8 L592.2 391.8 L599.5 391.9 L607.1 392 L614.9 392 L622.8 392.1 L630.5 392.2 L637.9 392.3 L645.4 392.3 L653.1 392.4 L661 392.5 L668.8 392.6 L676.7 392.6 L684.5 392.7 L692 392.7 L699.5 392.7 L707.1 392.7 L714.9 392.7 L722.8 392.7 L730.6 392.7 L738.4 392.7 L746.3 392.7 L754.1 392.7 L762 392.7 L769.8 392.6 L777.7 392.6 L785.5 392.6M538.5 374.1 L546.3 374.2 L554.1 374.3 L561.6 374.4 L568.9 374.5 L576.7 374.6 L584.5 374.7 L592 374.8 L599.4 374.9 L607.1 375 L614.9 375.1 L622.7 375.2 L630.3 375.3 L637.6 375.4 L645.3 375.5 L653.1 375.6 L661 375.7 L668.8 375.9 L676.6 376 L684.1 376.1 L691.5 376.1 L699.2 376.2 L707.1 376.2 L714.9 376.2 L722.8 376.2 L730.6 376.2 L738.4 376.2 L746.3 376.2 L754.1 376.2 L762 376.2 L769.8 376.1 L777.7 376.1 L785.5 376.1M538.5 356.8 L546.3 356.9 L554.1 357 L561.5 357.1 L568.9 357.2 L576.7 357.4 L584.4 357.5 L591.7 357.6 L599.3 357.7 L607.1 357.9 L614.9 358 L622.6 358.1 L629.9 358.3 L637.5 358.4 L645.3 358.6 L653.1 358.7 L661 358.9 L668.7 359.2 L676.1 359.4 L683.6 359.5 L691.4 359.6 L699.2 359.7 L707.1 359.7 L714.9 359.7 L722.8 359.7 L730.6 359.7 L738.4 359.7 L746.3 359.7 L754.1 359.7 L762 359.7 L769.8 359.7 L777.7 359.7 L785.5 359.7M538.5 339.4 L546.3 339.5 L554 339.6 L561.4 339.8 L568.9 339.9 L576.7 340.1 L584.3 340.2 L591.6 340.4 L599.3 340.5 L607.1 340.6 L614.9 340.8 L622.3 341 L629.7 341.2 L637.5 341.4 L645.3 341.6 L653.1 341.8 L660.8 342.1 L668.2 342.4 L675.7 342.8 L683.5 343 L691.4 343.1 L699.2 343.2 L707.1 343.3 L714.9 343.3 L722.8 343.3 L730.6 343.4 L738.4 343.4 L746.3 343.4 L754.1 343.4 L762 343.4 L769.8 343.4 L777.7 343.4 L785.5 343.4M538.5 321.9 L546.3 322 L554 322.2 L561.3 322.3 L568.9 322.4 L576.7 322.6 L584.2 322.8 L591.5 323 L599.2 323.1 L607.1 323.3 L614.6 323.5 L622 323.7 L629.6 324 L637.5 324.2 L645.3 324.5 L653 324.8 L660.4 325.1 L667.9 325.6 L675.7 326.1 L683.5 326.4 L691.4 326.6 L699.2 326.8 L707.1 326.9 L714.9 326.9 L722.8 327 L730.6 327 L738.4 327 L746.3 327.1 L754.1 327.1 L762 327.1 L769.8 327.1 L777.7 327.1 L785.5 327.1M538.5 304.3 L546.3 304.4 L553.9 304.6 L561.3 304.7 L568.9 304.9 L576.6 305.1 L584.1 305.3 L591.5 305.5 L599.2 305.7 L606.9 305.9 L614.3 306.2 L621.8 306.4 L629.6 306.7 L637.5 307 L645.2 307.3 L652.5 307.7 L660.1 308.1 L667.8 308.8 L675.7 309.5 L683.5 309.9 L691.4 310.1 L699.2 310.3 L707.1 310.5 L714.9 310.6 L722.8 310.7 L730.6 310.7 L738.4 310.8 L746.3 310.8 L754.1 310.9 L762 310.9 L769.8 310.9 L777.7 310.9 L785.5 311M538.5 286.6 L546.3 286.7 L553.9 286.9 L561.3 287 L568.9 287.2 L576.6 287.5 L584 287.7 L591.5 287.9 L599.2 288.1 L606.7 288.4 L614.1 288.7 L621.8 288.9 L629.6 289.3 L637.4 289.7 L644.9 290.1 L652.3 290.6 L660 291.1 L667.8 292 L675.7 292.8 L683.5 293.3 L691.4 293.6 L699.2 293.9 L707.1 294.2 L714.9 294.3 L722.8 294.4 L730.6 294.5 L738.4 294.6 L746.3 294.7 L754.1 294.8 L762 294.8 L769.8 294.9 L777.7 294.9 L785.5 294.9M538.5 268.8 L546.3 268.9 L553.9 269.1 L561.2 269.2 L568.9 269.4 L576.6 269.7 L583.9 270 L591.4 270.3 L599.2 270.5 L606.6 270.8 L614 271.1 L621.8 271.4 L629.6 271.8 L637.3 272.3 L644.6 272.8 L652.2 273.3 L660 274 L667.8 275.1 L675.7 276.1 L683.5 276.8 L691.4 277.2 L699.2 277.6 L707.1 277.9 L714.9 278.1 L722.8 278.2 L730.6 278.3 L738.4 278.4 L746.3 278.6 L754.1 278.7 L762 278.8 L769.8 278.8 L777.7 278.9 L785.5 279M538.5 250.8 L546.3 251 L553.8 251.1 L561.2 251.3 L568.9 251.5 L576.5 251.9 L583.8 252.2 L591.4 252.5 L599.1 252.7 L606.5 253 L614 253.4 L621.8 253.8 L629.6 254.3 L637.3 254.8 L644.6 255.4 L652.2 256.1 L660 256.9 L667.8 258.2 L675.7 259.4 L683.5 260.3 L691.4 260.8 L699.2 261.2 L707.1 261.6 L714.9 261.9 L722.8 262.1 L730.6 262.2 L738.4 262.4 L746.3 262.5 L754.1 262.7 L762 262.8 L769.9 262.9 L777.7 263 L785.6 263.1M538.5 232.8 L546.3 232.9 L553.9 233.1 L561.2 233.3 L568.9 233.5 L576.5 233.9 L583.8 234.3 L591.4 234.6 L599.2 234.9 L606.6 235.2 L614 235.6 L621.8 236.1 L629.6 236.6 L637.4 237.3 L645 238 L652.4 238.7 L660 239.7 L667.8 241.3 L675.7 242.8 L683.5 243.8 L691.4 244.3 L699.3 244.9 L707.2 245.4 L715.1 245.7 L723.1 246 L731.1 246.2 L739 246.3 L746.9 246.6 L754.9 246.8 L762.8 247 L770.7 247.1 L778.6 247.2 L786.5 247.4M538.5 214.6 L546.3 214.8 L554 215 L561.3 215.2 L568.9 215.4 L576.6 215.8 L584.1 216.3 L591.5 216.6 L599.2 216.9 L607 217.3 L614.5 217.8 L621.9 218.2 L629.6 218.9 L637.5 219.6 L645.3 220.5 L653.1 221.4 L660.9 222.6 L668.6 224.5 L676.4 226.2 L684.3 227.3 L692.2 228 L700.1 228.7 L708 229.2 L715.9 229.6 L723.7 229.9 L731.6 230.2 L739.5 230.4 L747.3 230.7 L755.2 231 L763.1 231.2 L771 231.3 L779 231.5 L786.8 231.7M538.5 196.4 L546.3 196.5 L554.1 196.7 L561.5 196.9 L569 197.2 L576.7 197.7 L584.5 198.1 L592 198.5 L599.5 198.8 L607.1 199.3 L614.9 199.8 L622.6 200.4 L630.1 201.1 L637.6 201.9 L645.4 202.9 L653.2 204 L661 205.4 L668.9 207.6 L676.7 209.6 L684.6 210.9 L692.5 211.7 L700.5 212.5 L708.5 213.1 L716.5 213.6 L724.5 213.9 L732.4 214.2 L740.3 214.5 L748.2 214.9 L756.1 215.2 L764 215.5 L771.9 215.7 L779.8 215.9 L787.6 216.2M538.5 178 L546.3 178.1 L554.2 178.4 L562 178.6 L569.6 178.9 L577.1 179.4 L584.7 179.9 L592.4 180.3 L600.2 180.7 L607.9 181.2 L615.5 181.8 L623.1 182.4 L630.8 183.3 L638.5 184.2 L646.3 185.3 L654.1 186.6 L661.9 188.3 L669.7 190.9 L677.6 193 L685.5 194.5 L693.5 195.4 L701.5 196.4 L709.5 197.1 L717.4 197.7 L725.4 198 L733.4 198.4 L741.2 198.7 L749.2 199.2 L757 199.6 L764.9 199.9 L772.8 200.1 L780.7 200.4 L788.6 200.8M538.5 159.5 L546.3 159.6 L554.2 159.9 L562 160.1 L569.9 160.4 L577.7 161.1 L585.5 161.6 L593.4 162 L601.2 162.5 L608.8 163.1 L616.5 163.7 L624.3 164.5 L632 165.4 L639.7 166.5 L647.6 167.8 L655.4 169.3 L663.3 171.4 L671 174.3 L678.8 176.6 L686.9 178.2 L694.9 179.3 L702.8 180.4 L710.8 181.1 L718.7 181.8 L726.6 182.2 L734.5 182.6 L742.4 183 L750.2 183.6 L758.1 184 L766 184.4 L773.8 184.7 L781.7 185 L789.6 185.5M538.5 140.9 L546.5 141.1 L554.8 141.3 L562.9 141.6 L570.8 141.9 L578.7 142.7 L586.6 143.2 L594.5 143.7 L602.4 144.2 L610.3 144.9 L618.2 145.6 L626.1 146.5 L633.9 147.7 L641.6 148.9 L649.4 150.4 L657.2 152.1 L665 154.8 L672.9 158.1 L680.7 160.5 L688.8 162.1 L696.7 163.3 L704.5 164.5 L712.3 165.3 L720.2 165.9 L728.1 166.4 L735.9 166.9 L743.7 167.5 L751.5 168.1 L759.3 168.5 L767.1 169 L774.9 169.3 L782.7 169.7 L790.5 170.3M538.5 122.2 L547.1 122.4 L555.2 122.6 L563.1 122.9 L571.2 123.2 L579.7 124.2 L587.8 124.8 L595.7 125.3 L603.8 125.8 L611.9 126.7 L619.8 127.4 L627.8 128.5 L635.9 129.9 L644.1 131.4 L652 133.1 L659.9 135.3 L667.7 138.9 L675.6 142.3 L683.2 144.7 L690.9 146.1 L698.4 147.4 L706.1 148.6 L713.9 149.5 L721.6 150.2 L729.2 150.7 L736.9 151.3 L744.7 151.9 L752.5 152.6 L760.4 153.2 L768.2 153.7 L776 154.1 L783.8 154.6 L791.5 155.3M538.5 674.5 L538.5 657.9 L538.5 641.3 L538.5 624.8 L538.5 608.2 L538.5 591.6 L538.5 575 L538.5 558.4 L538.5 541.9 L538.5 525.3 L538.5 508.7 L538.5 492.1 L538.5 475.5 L538.5 458.9 L538.5 442.2 L538.5 425.3 L538.5 408.4 L538.5 391.3 L538.5 374.1 L538.5 356.8 L538.5 339.4 L538.5 321.9 L538.5 304.3 L538.5 286.6 L538.5 268.8 L538.5 250.8 L538.5 232.8 L538.5 214.6 L538.5 196.4 L538.5 178 L538.5 159.5 L538.5 140.9 L538.5 122.2M546.3 674.5 L546.3 657.9 L546.3 641.3 L546.3 624.8 L546.3 608.2 L546.3 591.6 L546.3 575 L546.3 558.4 L546.3 541.9 L546.3 525.3 L546.3 508.7 L546.3 492.1 L546.3 475.5 L546.3 458.9 L546.3 442.2 L546.3 425.4 L546.3 408.4 L546.3 391.4 L546.3 374.2 L546.3 356.9 L546.3 339.5 L546.3 322 L546.3 304.4 L546.3 286.7 L546.3 268.9 L546.3 251 L546.3 232.9 L546.3 214.8 L546.3 196.5 L546.3 178.1 L546.3 159.6 L546.5 141.1 L547.1 122.4M554.2 674.5 L554.2 657.9 L554.2 641.3 L554.2 624.8 L554.2 608.2 L554.2 591.6 L554.2 575 L554.2 558.4 L554.2 541.9 L554.2 525.3 L554.2 508.7 L554.2 492.1 L554.2 475.5 L554.2 458.9 L554.2 442.2 L554.2 425.4 L554.2 408.5 L554.1 391.4 L554.1 374.3 L554.1 357 L554 339.6 L554 322.2 L553.9 304.6 L553.9 286.9 L553.9 269.1 L553.8 251.1 L553.9 233.1 L554 215 L554.1 196.7 L554.2 178.4 L554.2 159.9 L554.8 141.3 L555.2 122.6M562 674.5 L562 657.9 L562 641.3 L562 624.8 L562 608.2 L562 591.6 L562 575 L562 558.4 L562 541.9 L562 525.3 L562 508.7 L562 492.1 L562 475.5 L562 458.9 L562 442.3 L561.9 425.4 L561.8 408.5 L561.6 391.5 L561.6 374.4 L561.5 357.1 L561.4 339.8 L561.3 322.3 L561.3 304.7 L561.3 287 L561.2 269.2 L561.2 251.3 L561.2 233.3 L561.3 215.2 L561.5 196.9 L562 178.6 L562 160.1 L562.9 141.6 L563.1 122.9M569.9 674.5 L569.9 657.9 L569.9 641.3 L569.9 624.8 L569.9 608.2 L569.9 591.6 L569.9 575 L569.9 558.4 L569.8 541.9 L569.8 525.3 L569.8 508.7 L569.7 492.1 L569.6 475.5 L569.6 459 L569.5 442.3 L569.3 425.5 L569.2 408.6 L569 391.6 L568.9 374.5 L568.9 357.2 L568.9 339.9 L568.9 322.4 L568.9 304.9 L568.9 287.2 L568.9 269.4 L568.9 251.5 L568.9 233.5 L568.9 215.4 L569 197.2 L569.6 178.9 L569.9 160.4 L570.8 141.9 L571.2 123.2M577.6 674.5 L577.6 657.9 L577.6 641.3 L577.6 624.8 L577.6 608.2 L577.5 591.6 L577.5 575 L577.5 558.4 L577.5 541.9 L577.4 525.3 L577.2 508.7 L577.1 492.1 L577 475.5 L576.9 459 L576.8 442.3 L576.8 425.5 L576.7 408.7 L576.7 391.7 L576.7 374.6 L576.7 357.4 L576.7 340.1 L576.7 322.6 L576.6 305.1 L576.6 287.5 L576.6 269.7 L576.5 251.9 L576.5 233.9 L576.6 215.8 L576.7 197.7 L577.1 179.4 L577.7 161.1 L578.7 142.7 L579.7 124.2M585.1 674.5 L585 657.9 L584.9 641.3 L584.9 624.8 L584.9 608.2 L584.9 591.6 L584.9 575 L584.8 558.4 L584.7 541.9 L584.7 525.3 L584.6 508.7 L584.6 492.1 L584.6 475.5 L584.6 459 L584.6 442.3 L584.6 425.6 L584.6 408.7 L584.5 391.8 L584.5 374.7 L584.4 357.5 L584.3 340.2 L584.2 322.8 L584.1 305.3 L584 287.7 L583.9 270 L583.8 252.2 L583.8 234.3 L584.1 216.3 L584.5 198.1 L584.7 179.9 L585.5 161.6 L586.6 143.2 L587.8 124.8M592.6 674.5 L592.5 657.9 L592.4 641.3 L592.4 624.8 L592.4 608.2 L592.4 591.6 L592.4 575 L592.4 558.4 L592.4 541.9 L592.4 525.3 L592.4 508.7 L592.4 492.1 L592.4 475.5 L592.4 459 L592.4 442.3 L592.4 425.6 L592.4 408.8 L592.2 391.8 L592 374.8 L591.7 357.6 L591.6 340.4 L591.5 323 L591.5 305.5 L591.5 287.9 L591.4 270.3 L591.4 252.5 L591.4 234.6 L591.5 216.6 L592 198.5 L592.4 180.3 L593.4 162 L594.5 143.7 L595.7 125.3M600.4 674.5 L600.2 657.9 L600.2 641.3 L600.2 624.8 L600.2 608.2 L600.2 591.6 L600.2 575 L600.2 558.4 L600.2 541.9 L600.2 525.3 L600.2 508.7 L600.2 492.1 L600.2 475.5 L600.2 459 L600.2 442.3 L600.1 425.6 L599.8 408.8 L599.5 391.9 L599.4 374.9 L599.3 357.7 L599.3 340.5 L599.2 323.1 L599.2 305.7 L599.2 288.1 L599.2 270.5 L599.1 252.7 L599.2 234.9 L599.2 216.9 L599.5 198.8 L600.2 180.7 L601.2 162.5 L602.4 144.2 L603.8 125.8M608.2 674.5 L608.1 657.9 L608.1 641.3 L608.1 624.8 L608.1 608.2 L608.1 591.6 L608.1 575 L608.1 558.4 L608.1 541.9 L608.1 525.3 L608.1 508.7 L608.1 492.1 L608.1 475.5 L608 459 L607.7 442.4 L607.5 425.7 L607.2 408.9 L607.1 392 L607.1 375 L607.1 357.9 L607.1 340.6 L607.1 323.3 L606.9 305.9 L606.7 288.4 L606.6 270.8 L606.5 253 L606.6 235.2 L607 217.3 L607.1 199.3 L607.9 181.2 L608.8 163.1 L610.3 144.9 L611.9 126.7M616.1 674.5 L615.9 657.9 L615.9 641.3 L615.9 624.8 L615.9 608.2 L615.9 591.6 L615.9 575 L615.9 558.4 L615.9 541.9 L615.9 525.3 L615.9 508.7 L615.8 492.1 L615.6 475.5 L615.4 459 L615.1 442.4 L615 425.7 L614.9 408.9 L614.9 392 L614.9 375.1 L614.9 358 L614.9 340.8 L614.6 323.5 L614.3 306.2 L614.1 288.7 L614 271.1 L614 253.4 L614 235.6 L614.5 217.8 L614.9 199.8 L615.5 181.8 L616.5 163.7 L618.2 145.6 L619.8 127.4M623.9 674.5 L623.8 657.9 L623.8 641.3 L623.8 624.8 L623.8 608.2 L623.8 591.6 L623.8 575 L623.8 558.4 L623.8 541.9 L623.7 525.3 L623.5 508.7 L623.2 492.1 L623 475.5 L622.8 459 L622.8 442.4 L622.8 425.7 L622.8 409 L622.8 392.1 L622.7 375.2 L622.6 358.1 L622.3 341 L622 323.7 L621.8 306.4 L621.8 288.9 L621.8 271.4 L621.8 253.8 L621.8 236.1 L621.9 218.2 L622.6 200.4 L623.1 182.4 L624.3 164.5 L626.1 146.5 L627.8 128.5M631.8 674.5 L631.6 657.9 L631.6 641.3 L631.6 624.8 L631.6 608.2 L631.6 591.6 L631.6 575 L631.5 558.4 L631.4 541.9 L631.1 525.3 L630.8 508.7 L630.7 492.1 L630.6 475.5 L630.6 459 L630.6 442.4 L630.6 425.7 L630.6 409 L630.5 392.2 L630.3 375.3 L629.9 358.3 L629.7 341.2 L629.6 324 L629.6 306.7 L629.6 289.3 L629.6 271.8 L629.6 254.3 L629.6 236.6 L629.6 218.9 L630.1 201.1 L630.8 183.3 L632 165.4 L633.9 147.7 L635.9 129.9M639.5 674.5 L639.4 657.9 L639.4 641.3 L639.4 624.8 L639.4 608.2 L639.3 591.6 L639.2 575 L639 558.4 L638.7 541.9 L638.5 525.3 L638.5 508.7 L638.5 492.1 L638.5 475.5 L638.5 459 L638.5 442.4 L638.5 425.8 L638.4 409.1 L637.9 392.3 L637.6 375.4 L637.5 358.4 L637.5 341.4 L637.5 324.2 L637.5 307 L637.4 289.7 L637.3 272.3 L637.3 254.8 L637.4 237.3 L637.5 219.6 L637.6 201.9 L638.5 184.2 L639.7 166.5 L641.6 148.9 L644.1 131.4M647 674.5 L646.8 657.9 L646.8 641.3 L646.8 624.8 L646.7 608.2 L646.6 591.6 L646.5 575 L646.4 558.4 L646.3 541.9 L646.3 525.3 L646.3 508.7 L646.3 492.1 L646.3 475.5 L646.3 459 L646.3 442.4 L646.2 425.8 L645.7 409.1 L645.4 392.3 L645.3 375.5 L645.3 358.6 L645.3 341.6 L645.3 324.5 L645.2 307.3 L644.9 290.1 L644.6 272.8 L644.6 255.4 L645 238 L645.3 220.5 L645.4 202.9 L646.3 185.3 L647.6 167.8 L649.4 150.4 L652 133.1M654.5 674.5 L654.2 657.9 L654.2 641.3 L654.2 624.8 L654.2 608.2 L654.2 591.6 L654.2 575 L654.2 558.4 L654.2 541.9 L654.2 525.3 L654.2 508.7 L654.2 492.1 L654.2 475.5 L654.1 459 L654 442.4 L653.6 425.8 L653.2 409.1 L653.1 392.4 L653.1 375.6 L653.1 358.7 L653.1 341.8 L653 324.8 L652.5 307.7 L652.3 290.6 L652.2 273.3 L652.2 256.1 L652.4 238.7 L653.1 221.4 L653.2 204 L654.1 186.6 L655.4 169.3 L657.2 152.1 L659.9 135.3M662.3 674.5 L662 657.9 L662 641.3 L662 624.8 L662 608.2 L662 591.6 L662 575 L662 558.4 L662 541.9 L662 525.3 L662 508.7 L662 492.1 L662 475.5 L661.8 459 L661.4 442.4 L661.1 425.8 L661 409.2 L661 392.5 L661 375.7 L661 358.9 L660.8 342.1 L660.4 325.1 L660.1 308.1 L660 291.1 L660 274 L660 256.9 L660 239.7 L660.9 222.6 L661 205.4 L661.9 188.3 L663.3 171.4 L665 154.8 L667.7 138.9M670.1 674.5 L669.8 657.9 L669.8 641.3 L669.8 624.8 L669.8 608.2 L669.8 591.6 L669.8 575 L669.8 558.4 L669.8 541.9 L669.8 525.3 L669.8 508.7 L669.8 492.1 L669.6 475.5 L669.2 459 L668.9 442.4 L668.8 425.8 L668.8 409.2 L668.8 392.6 L668.8 375.9 L668.7 359.2 L668.2 342.4 L667.9 325.6 L667.8 308.8 L667.8 292 L667.8 275.1 L667.8 258.2 L667.8 241.3 L668.6 224.5 L668.9 207.6 L669.7 190.9 L671 174.3 L672.9 158.1 L675.6 142.3M678 674.5 L677.7 657.9 L677.7 641.3 L677.7 624.8 L677.7 608.2 L677.7 591.6 L677.7 575 L677.7 558.4 L677.7 541.9 L677.7 525.3 L677.6 508.7 L677.4 492.1 L677 475.5 L676.7 459 L676.7 442.4 L676.7 425.8 L676.7 409.2 L676.7 392.6 L676.6 376 L676.1 359.4 L675.7 342.8 L675.7 326.1 L675.7 309.5 L675.7 292.8 L675.7 276.1 L675.7 259.4 L675.7 242.8 L676.4 226.2 L676.7 209.6 L677.6 193 L678.8 176.6 L680.7 160.5 L683.2 144.7M685.8 674.5 L685.5 657.9 L685.5 641.3 L685.5 624.8 L685.5 608.2 L685.5 591.6 L685.5 575 L685.5 558.4 L685.5 541.9 L685.5 525.3 L685.2 508.7 L684.7 492.1 L684.5 475.5 L684.5 459 L684.5 442.4 L684.5 425.8 L684.5 409.2 L684.5 392.7 L684.1 376.1 L683.6 359.5 L683.5 343 L683.5 326.4 L683.5 309.9 L683.5 293.3 L683.5 276.8 L683.5 260.3 L683.5 243.8 L684.3 227.3 L684.6 210.9 L685.5 194.5 L686.9 178.2 L688.8 162.1 L690.9 146.1M693.6 674.5 L693.4 657.9 L693.4 641.3 L693.4 624.8 L693.4 608.2 L693.4 591.6 L693.4 575 L693.4 558.4 L693.3 541.9 L692.9 525.3 L692.5 508.7 L692.4 492.1 L692.4 475.5 L692.4 459 L692.4 442.4 L692.4 425.8 L692.4 409.2 L692 392.7 L691.5 376.1 L691.4 359.6 L691.4 343.1 L691.4 326.6 L691.4 310.1 L691.4 293.6 L691.4 277.2 L691.4 260.8 L691.4 244.3 L692.2 228 L692.5 211.7 L693.5 195.4 L694.9 179.3 L696.7 163.3 L698.4 147.4M701.5 674.5 L701.2 657.9 L701.2 641.3 L701.2 624.8 L701.2 608.2 L701.2 591.6 L701.1 575 L701 558.4 L700.6 541.9 L700.3 525.3 L700.2 508.7 L700.2 492.1 L700.2 475.5 L700.2 459 L700.2 442.4 L700.2 425.8 L700.1 409.2 L699.5 392.7 L699.2 376.2 L699.2 359.7 L699.2 343.2 L699.2 326.8 L699.2 310.3 L699.2 293.9 L699.2 277.6 L699.2 261.2 L699.3 244.9 L700.1 228.7 L700.5 212.5 L701.5 196.4 L702.8 180.4 L704.5 164.5 L706.1 148.6M709.3 674.5 L709 657.9 L709 641.3 L709 624.8 L708.8 608.2 L708.7 591.6 L708.5 575 L708.3 558.4 L708.1 541.9 L708.1 525.3 L708.1 508.7 L708.1 492.1 L708.1 475.5 L708.1 459 L708.1 442.4 L708 425.8 L707.5 409.2 L707.1 392.7 L707.1 376.2 L707.1 359.7 L707.1 343.3 L707.1 326.9 L707.1 310.5 L707.1 294.2 L707.1 277.9 L707.1 261.6 L707.2 245.4 L708 229.2 L708.5 213.1 L709.5 197.1 L710.8 181.1 L712.3 165.3 L713.9 149.5M716.7 674.5 L716.4 657.9 L716.4 641.3 L716.3 624.8 L716.2 608.2 L716 591.6 L716 575 L715.9 558.4 L715.9 541.9 L715.9 525.3 L715.9 508.7 L715.9 492.1 L715.9 475.5 L715.9 459 L715.8 442.4 L715.5 425.8 L715 409.2 L714.9 392.7 L714.9 376.2 L714.9 359.7 L714.9 343.3 L714.9 326.9 L714.9 310.6 L714.9 294.3 L714.9 278.1 L714.9 261.9 L715.1 245.7 L715.9 229.6 L716.5 213.6 L717.4 197.7 L718.7 181.8 L720.2 165.9 L721.6 150.2M724.2 674.5 L723.8 657.9 L723.8 641.3 L723.8 624.8 L723.8 608.2 L723.7 591.6 L723.7 575 L723.7 558.4 L723.7 541.9 L723.7 525.3 L723.7 508.7 L723.7 492.1 L723.7 475.5 L723.7 459 L723.3 442.4 L722.9 425.8 L722.8 409.2 L722.8 392.7 L722.8 376.2 L722.8 359.7 L722.8 343.3 L722.8 327 L722.8 310.7 L722.8 294.4 L722.8 278.2 L722.8 262.1 L723.1 246 L723.7 229.9 L724.5 213.9 L725.4 198 L726.6 182.2 L728.1 166.4 L729.2 150.7M732 674.5 L731.6 657.9 L731.6 641.3 L731.6 624.8 L731.6 608.2 L731.6 591.6 L731.6 575 L731.6 558.4 L731.6 541.9 L731.6 525.3 L731.6 508.7 L731.6 492.1 L731.6 475.5 L731.3 459 L730.7 442.4 L730.6 425.8 L730.6 409.2 L730.6 392.7 L730.6 376.2 L730.6 359.7 L730.6 343.4 L730.6 327 L730.6 310.7 L730.6 294.5 L730.6 278.3 L730.6 262.2 L731.1 246.2 L731.6 230.2 L732.4 214.2 L733.4 198.4 L734.5 182.6 L735.9 166.9 L736.9 151.3M739.8 674.5 L739.4 657.9 L739.4 641.3 L739.4 624.8 L739.4 608.2 L739.4 591.6 L739.4 575 L739.4 558.4 L739.4 541.9 L739.4 525.3 L739.4 508.7 L739.4 492.1 L739.2 475.5 L738.6 459 L738.4 442.4 L738.4 425.8 L738.4 409.2 L738.4 392.7 L738.4 376.2 L738.4 359.7 L738.4 343.4 L738.4 327 L738.4 310.8 L738.4 294.6 L738.4 278.4 L738.4 262.4 L739 246.3 L739.5 230.4 L740.3 214.5 L741.2 198.7 L742.4 183 L743.7 167.5 L744.7 151.9M747.7 674.5 L747.3 657.9 L747.3 641.3 L747.3 624.8 L747.3 608.2 L747.3 591.6 L747.3 575 L747.3 558.4 L747.3 541.9 L747.3 525.3 L747.3 508.7 L747 492.1 L746.5 475.5 L746.3 459 L746.3 442.4 L746.3 425.8 L746.3 409.2 L746.3 392.7 L746.3 376.2 L746.3 359.7 L746.3 343.4 L746.3 327.1 L746.3 310.8 L746.3 294.7 L746.3 278.6 L746.3 262.5 L746.9 246.6 L747.3 230.7 L748.2 214.9 L749.2 199.2 L750.2 183.6 L751.5 168.1 L752.5 152.6M755.5 674.5 L755.1 657.9 L755.1 641.3 L755.1 624.8 L755.1 608.2 L755.1 591.6 L755.1 575 L755.1 558.4 L755.1 541.9 L755.1 525.3 L754.9 508.7 L754.4 492.1 L754.1 475.5 L754.1 459 L754.1 442.4 L754.1 425.8 L754.1 409.2 L754.1 392.7 L754.1 376.2 L754.1 359.7 L754.1 343.4 L754.1 327.1 L754.1 310.9 L754.1 294.8 L754.1 278.7 L754.1 262.7 L754.9 246.8 L755.2 231 L756.1 215.2 L757 199.6 L758.1 184 L759.3 168.5 L760.4 153.2M763.4 674.5 L763 657.9 L763 641.3 L763 624.8 L763 608.2 L763 591.6 L763 575 L763 558.4 L762.9 541.9 L762.6 525.3 L762.2 508.7 L762 492.1 L762 475.5 L762 459 L762 442.4 L762 425.8 L762 409.2 L762 392.7 L762 376.2 L762 359.7 L762 343.4 L762 327.1 L762 310.9 L762 294.8 L762 278.8 L762 262.8 L762.8 247 L763.1 231.2 L764 215.5 L764.9 199.9 L766 184.4 L767.1 169 L768.2 153.7M771.2 674.5 L770.8 657.9 L770.8 641.3 L770.8 624.8 L770.8 608.2 L770.8 591.6 L770.8 575 L770.6 558.4 L770.5 541.9 L770 525.3 L769.8 508.7 L769.8 492.1 L769.8 475.5 L769.8 459 L769.8 442.4 L769.8 425.8 L769.8 409.2 L769.8 392.6 L769.8 376.1 L769.8 359.7 L769.8 343.4 L769.8 327.1 L769.8 310.9 L769.8 294.9 L769.8 278.8 L769.9 262.9 L770.7 247.1 L771 231.3 L771.9 215.7 L772.8 200.1 L773.8 184.7 L774.9 169.3 L776 154.1M779.1 674.5 L778.6 657.9 L778.6 641.3 L778.6 624.8 L778.5 608.2 L778.5 591.6 L778.2 575 L778 558.4 L777.8 541.9 L777.7 525.3 L777.7 508.7 L777.7 492.1 L777.7 475.5 L777.7 459 L777.7 442.4 L777.7 425.8 L777.7 409.2 L777.7 392.6 L777.7 376.1 L777.7 359.7 L777.7 343.4 L777.7 327.1 L777.7 310.9 L777.7 294.9 L777.7 278.9 L777.7 263 L778.6 247.2 L779 231.5 L779.8 215.9 L780.7 200.4 L781.7 185 L782.7 169.7 L783.8 154.6M786.9 674.5 L786.5 657.9 L786.5 641.3 L786.5 624.8 L785.9 608.2 L785.7 591.6 L785.6 575 L785.5 558.4 L785.5 541.9 L785.5 525.3 L785.5 508.7 L785.5 492.1 L785.5 475.5 L785.5 459 L785.5 442.4 L785.5 425.8 L785.5 409.2 L785.5 392.6 L785.5 376.1 L785.5 359.7 L785.5 343.4 L785.5 327.1 L785.5 311 L785.5 294.9 L785.5 279 L785.6 263.1 L786.5 247.4 L786.8 231.7 L787.6 216.2 L788.6 200.8 L789.6 185.5 L790.5 170.3 L791.5 155.3"/>
<path fill="none" stroke="#00FFFF" stroke-width="1" d="M538.5 170 V675M546.5 170 V675M554.5 170 V675M562.5 170 V675M569.5 170 V675M577.5 170 V675M585.5 170 V675M593.5 170 V675M601.5 170 V675M609.5 170 V675M616.5 170 V675M624.5 170 V675M632.5 170 V675M640.5 170 V675M648.5 170 V675M656.5 170 V675M664.5 170 V675M671.5 170 V675M679.5 170 V675M687.5 170 V675M695.5 170 V675M703.5 170 V675M711.5 170 V675M718.5 170 V675M726.5 170 V675M734.5 170 V675M742.5 170 V675M750.5 170 V675M758.5 170 V675M765.5 170 V675M773.5 170 V675M781.5 170 V675M789.5 170 V675M538 674.5 H790M538 658.5 H790M538 642.5 H790M538 627.5 H790M538 611.5 H790M538 595.5 H790M538 580.5 H790M538 564.5 H790M538 548.5 H790M538 532.5 H790M538 516.5 H790M538 501.5 H790M538 485.5 H790M538 469.5 H790M538 454.5 H790M538 438.5 H790M538 422.5 H790M538 406.5 H790M538 390.5 H790M538 375.5 H790M538 359.5 H790M538 343.5 H790M538 328.5 H790M538 312.5 H790M538 296.5 H790M538 280.5 H790M538 264.5 H790M538 249.5 H790M538 233.5 H790M538 217.5 H790M538 202.5 H790M538 186.5 H790M538 170.5 H790"/>
<path fill="none" stroke="#000" stroke-width="1" d="M528 674.5 H578 M538.5 634 V703"/>
</svg>
<!-- viewport overlay: view buttons + triad -->
<svg style="left:780px;top:98px" width="90" height="30" viewBox="780 98 90 30">
  <path d="M787 100 H858 V121 Q858 124 855 124 H790 Q787 124 787 121 Z" fill="#DCDCDC"/>
  <path d="M857.5 103 V122" stroke="#A4A4A4" stroke-width="1" fill="none"/>
  <rect x="810.5" y="101.5" width="22" height="21" fill="#DDDDDD" stroke="#3399FF" stroke-width="1"/>
  <!-- btn1 -->
  <g fill="none" stroke="#3C3C3C" stroke-width="1">
    <path d="M791.5 109.5 H800 V118.5 H791.5 Z" fill="#E6E6E6"/>
    <path d="M791.5 109.5 L796.3 105.5 H804.8 L800 109.5" fill="#E6E6E6"/>
    <path d="M804.8 105.5 V114.2 L800 118.5" fill="#E6E6E6"/>
  </g>
  <path d="M799.6 106.6 L802.3 109.5 L799.6 112.4 L796.9 109.5 Z" fill="#0000F0"/>
  <!-- btn2 -->
  <g stroke="#3C3C3C" stroke-width="1">
    <path d="M814.5 109.5 L819.3 105.5 H827.8 L823 109.5 Z" fill="#E2E2E2"/>
    <path d="M827.8 105.5 V114.2 L823 118.5 V109.5 Z" fill="#E2E2E2"/>
    <path d="M814.5 109.5 H823 V118.5 H814.5 Z" fill="#0000F0"/>
  </g>
  <!-- btn3 -->
  <g stroke="#4A4A4A" stroke-width="1" fill="#0000F0">
    <path d="M837.5 109.5 L842.3 105.5 H850.8 L846 109.5 Z"/>
    <path d="M850.8 105.5 V114.2 L846 118.5 V109.5 Z"/>
    <path d="M837.5 109.5 H846 V118.5 H837.5 Z"/>
  </g>
</svg>
<svg style="left:1290px;top:595px" width="70" height="70" viewBox="1290 595 70 70">
  <rect x="1301.9" y="621" width="5" height="26" fill="#00FF00"/>
  <path d="M1304.4 611 L1310 622 H1298.8 Z" fill="#00FF00"/>
  <rect x="1306" y="647.2" width="26" height="4.6" fill="#FF0000"/>
  <path d="M1343 649.5 L1331.2 644.2 V654.8 Z" fill="#FF0000"/>
  <circle cx="1304.1" cy="649.5" r="5.7" fill="#0000FF"/>
  <circle cx="1319.4" cy="634.4" r="5.1" fill="#00F4F4" stroke="#00C4C4" stroke-width="0.8"/>
  <text x="1304.5" y="608.8" text-anchor="middle" font-family="Liberation Sans" font-weight="bold" font-size="12.5" fill="#00FF00">Y</text>
  <text x="1349.8" y="654.2" text-anchor="middle" font-family="Liberation Sans" font-weight="bold" font-size="12.5" fill="#FF0000">X</text>
</svg>
<!-- status bar -->
<div class="abs" style="left:0;top:706px;width:1366px;height:1px;background:#E3E3E3;"></div>
<div class="abs" id="status" style="left:4px;top:710px;font-size:12px;letter-spacing:0.1px;line-height:16px;white-space:nowrap;">Solved at 2016-06-14T12:42:05.48</div>
<!-- taskbar -->
<div class="abs" style="left:0;top:728px;width:1366px;height:40px;background:#8E8E8E;"></div>
<div class="abs" style="left:0;top:728px;width:1366px;height:1px;background:#848484;"></div>
<!-- taskbar items -->
<svg style="left:0;top:728px" width="1366" height="40" viewBox="0 728 1366 40">
<defs>
 <radialGradient id="lg2" cx="0.68" cy="0.32" r="0.75"><stop offset="0" stop-color="#FF7208"/><stop offset="0.5" stop-color="#F03C04"/><stop offset="1" stop-color="#D81000"/></radialGradient>
 <linearGradient id="ieg" x1="0" y1="0" x2="0" y2="1"><stop offset="0" stop-color="#7FD4FA"/><stop offset="0.5" stop-color="#2E9EE8"/><stop offset="1" stop-color="#1C78D0"/></linearGradient>
 <linearGradient id="fog" x1="0" y1="0" x2="0" y2="1"><stop offset="0" stop-color="#FBEBA8"/><stop offset="1" stop-color="#EEC658"/></linearGradient>
 <linearGradient id="blg" x1="0" y1="0" x2="0" y2="1"><stop offset="0" stop-color="#5078CC"/><stop offset="0.6" stop-color="#2C4890"/><stop offset="1" stop-color="#182860"/></linearGradient>
 <linearGradient id="rdg" x1="0" y1="0" x2="0" y2="1"><stop offset="0" stop-color="#8A0C0C"/><stop offset="1" stop-color="#4C0000"/></linearGradient>
 <linearGradient id="stg" x1="0" y1="0" x2="0" y2="1"><stop offset="0" stop-color="#A0DCFC"/><stop offset="1" stop-color="#48A4E8"/></linearGradient>
 <linearGradient id="slv" x1="0" y1="0" x2="1" y2="1"><stop offset="0" stop-color="#FFFFFF"/><stop offset="1" stop-color="#A8A8A8"/></linearGradient>
</defs>
<!-- boxes -->
<g shape-rendering="crispEdges">
<rect x="78.5" y="728.5" width="54" height="39" fill="#9E9E9E" stroke="#7C7C7C"/>
<rect x="79.5" y="729.5" width="52" height="38" fill="none" stroke="#B4B4B4"/>
<rect x="132.5" y="728.5" width="5" height="39" fill="#9E9E9E" stroke="#7C7C7C"/>
<path d="M133.5 729.5 H136.5 V768" fill="none" stroke="#B4B4B4"/>
<rect x="140.5" y="728.5" width="59" height="39" fill="#9E9E9E" stroke="#7C7C7C"/>
<rect x="141.5" y="729.5" width="57" height="38" fill="none" stroke="#B4B4B4"/>
<rect x="388.5" y="728.5" width="59" height="39" fill="#B0B0B0" stroke="#6E6E6E"/>
<rect x="389.5" y="729.5" width="57" height="38" fill="none" stroke="#FAFAFA"/>
<rect x="450.5" y="728.5" width="59" height="39" fill="#A0A0A0" stroke="#7C7C7C"/>
<rect x="451.5" y="729.5" width="57" height="38" fill="none" stroke="#B8B8B8"/>
</g>
<!-- IE -->
<g transform="translate(47.4 748.4) scale(1.09) translate(-47.8 -748.5)">
 <path d="M47.6 736.4 C40 736.4 35.6 742 35.6 748.6 C35.6 755.6 40.6 760.6 47.8 760.6 C53 760.6 57 758 58.8 753.6 L51.6 753.6 C50.8 755 49.6 755.6 47.8 755.6 C44.6 755.6 42.8 753.4 42.6 750.6 L59.6 750.6 C60.4 742.4 55.6 736.4 47.6 736.4 Z M42.8 746 C43.2 743.4 44.8 741.4 47.6 741.4 C50.4 741.4 52.2 743.4 52.4 746 Z" fill="url(#ieg)"/>
 <path d="M33.6 760 C29.6 753.6 36 742 46 736 C53 731.6 58.6 732.4 59.6 736.6 C60 738 59.8 739.6 59.2 741.4 C59.6 738 57.8 734.4 52 736 C44 738.4 34.6 750 34.8 757.6 C34.8 760.4 36.4 762 38.8 761.6 C36.4 762.8 34.6 762 33.6 760 Z" fill="#F8C010" stroke="#E0A000" stroke-width="0.4"/>
</g>
<!-- explorer -->
<g>
 <path d="M91 737 H103.4 L104.4 739 H118 Q119 739 119 740 V744 H90 V738 Q90 737 91 737 Z" fill="#F4DC8C" stroke="#C8A850" stroke-width="0.6"/>
 <rect x="93" y="736.2" width="10" height="2" fill="#FFFFFF"/><rect x="93" y="736.2" width="3" height="2" fill="#10C030"/>
 <rect x="101" y="738" width="10" height="2" fill="#FFFFFF"/><rect x="101" y="738" width="3" height="2" fill="#D82020"/>
 <rect x="109" y="740" width="9" height="2" fill="#FFFFFF"/><rect x="109" y="740" width="3" height="2" fill="#1890F0"/>
 <path d="M90 742.6 H106.6 L108 741 H119.6 Q120.6 741 120.6 742 V760.6 Q120.6 761.6 119.6 761.6 H90.6 Q89.6 761.6 89.6 760.6 Z" fill="url(#fog)" stroke="#D0A848" stroke-width="0.7"/>
 <path d="M93.6 763.6 V753.2 Q93.6 751.2 95.6 751.2 H114.6 Q116.6 751.2 116.6 753.2 V763.6 H110.6 V757 H99.6 V763.6 Z" fill="url(#stg)" stroke="#2C88D0" stroke-width="0.8" fill-opacity="0.92"/>
 <path d="M96.6 746.8 L96.8 756 M92 753.4 H101 M99.6 750 L94 757" stroke="#FFFFFF" stroke-width="0.7" opacity="0.9"/>
</g>
<!-- blue laptop icon -->
<g>
 <rect x="154" y="732" width="32" height="31.6" fill="url(#blg)"/>
 <path d="M154 763.6 H186 V732" stroke="#101C48" stroke-width="1" fill="none"/>
 <path d="M161 755 V745.2 H166.8 M171.4 753 H174.4 V755" stroke="#FFFFFF" stroke-width="2" fill="none"/>
 <path d="M157.2 757.8 L159.2 754.8 H176.4 L178.2 757.8 Z" fill="#FFFFFF"/>
 <circle cx="175.6" cy="743.4" r="6.9" fill="#2C4C98" stroke="#FFFFFF" stroke-width="1.5"/>
 <circle cx="172.8" cy="742.8" r="1.9" fill="#10D0B8"/><path d="M179 739.4 V743.6 L175.8 741.6 Z" fill="#10D0B8"/><path d="M177 744.6 L179 746.8 L177 749 L175 746.8 Z" fill="#10D0B8"/>
</g>
<!-- red play -->
<g>
 <ellipse cx="232" cy="759.6" rx="10" ry="1.2" fill="#6E6E6E"/>
 <rect x="219" y="737.4" width="26.4" height="21.4" rx="7.5" fill="#B4B4B4"/><rect x="220" y="738.2" width="24.4" height="19.6" rx="6.8" fill="#6C6C6C"/>
 <rect x="221.4" y="739.4" width="21.6" height="17.4" rx="5.6" fill="url(#rdg)"/>
 <path d="M229 742.8 L236.8 747.8 L229 753.2 Z" fill="none" stroke="#C86464" stroke-width="1.3" stroke-linejoin="round"/>
</g>
<!-- chat -->
<g>
 <path d="M284.6 735.6 H309.6 V753.6 L302.6 759.6 H278.6 V741 Z" fill="url(#slv)"/>
 <path d="M286 737.4 H308 V752.6 L301.6 757.6 H283.4 V740 Z" fill="#2C54A8"/>
 <path d="M283.4 750 Q295 746 308 751 V752.6 L301.6 757.6 H283.4 Z" fill="#1C3C8C"/>
 <path d="M285.6 743.6 H296.6 Q297.6 743.6 297.6 744.6 V751.4 Q297.6 752.4 296.6 752.4 H290.6 L288 754.6 V752.4 H286.6 Q285.6 752.4 285.6 751.4 Z" fill="#F4F6FA"/>
 <path d="M298.4 741 H306.4 V748.6 L304.6 747.4 H298.8 V744" fill="#F4F6FA"/>
 <path d="M287.4 746 H295.6 M287.4 748 H293.6 M299.6 743 H305 M299.6 745 H303.6" stroke="#B8C4E0" stroke-width="0.8"/>
</g>
<!-- chrome -->
<g>
 <circle cx="355.9" cy="747.9" r="14.75" fill="#DD5144"/>
 <path d="M355.9 747.9 L343.1 740.5 A14.75 14.75 0 0 0 354 762.5 L361.7 751.2 Z" fill="#1DA462"/>
 <path d="M355.9 747.9 L354 762.5 A14.75 14.75 0 0 0 369.8 742.9 L355.9 742.9 Z" fill="#FFCD46"/>
 <path d="M343.1 740.5 L350.2 751.2 L355.9 747.9 Z" fill="#1DA462"/>
 <circle cx="355.9" cy="747.9" r="6.7" fill="#F4F4F4"/>
 <circle cx="355.9" cy="747.9" r="5.3" fill="#4C8BF5"/>
</g>
<!-- LISA -->
<g>
 <circle cx="418.25" cy="748.1" r="15.8" fill="#FFFFFF"/>
 <circle cx="418.25" cy="748.1" r="14.9" fill="url(#lg2)"/>
 <path d="M419.6 738.2 L412.6 756.2 L425 756.4" fill="none" stroke="#FFFFFF" stroke-width="4.6" stroke-linejoin="round" stroke-linecap="round"/>
 <path d="M419.4 739.6 L413.6 754.6" fill="none" stroke="#F04410" stroke-width="1.9" stroke-linecap="round"/>
</g>
<!-- paint -->
<g>
 <path d="M465 752 C465 744 472 738.6 480 738.4 C488 738.2 492.6 743 492.4 749 C492.2 756 485 761 477 760.8 C473 760.6 472.4 758 473.6 756.4 C474.6 755 473 754 471 754.6 C468 755.6 465 755 465 752 Z" fill="#C4E0F4" stroke="#5CA8DC" stroke-width="0.9"/>
 <circle cx="469.2" cy="749.6" r="2.2" fill="#E83C3C"/><circle cx="474.2" cy="744.6" r="2.2" fill="#48C038"/><circle cx="480.8" cy="742" r="2.3" fill="#F8B818"/>
 <circle cx="477.4" cy="751.8" r="1.8" fill="#E8F0F8" stroke="#4C98D0" stroke-width="1.1"/>
 <path d="M480 763.2 L487.6 745.4 L489.8 746.2 L481.2 763.2 Z" fill="#F08C18"/>
 <path d="M487.4 745.6 L489 740.6 L490.8 741.2 L489.8 746.2 Z" fill="#8C8C94"/>
 <path d="M488.6 740.8 L487.6 734.6 Q491 732.6 495.6 737 L491 741.6 Z" fill="#D8A868"/>
</g>
<!-- tray -->
<path d="M1179.6 750.6 L1183.4 746.8 L1187.2 750.6 Z" fill="#F4F4FC"/>
<g fill="none" stroke="#FFFFFF" stroke-width="1.2">
 <rect x="1206.6" y="743.6" width="8" height="12.6" rx="1"/>
 <path d="M1209 743.6 V742.2 H1212.2 V743.6"/>
 <path d="M1200.6 742 V746 M1203.4 742 V746 M1199.8 746.4 H1204.2 V749.4 H1199.8 Z M1202 749.4 V756.4"/>
</g>
<rect x="1208.4" y="745.6" width="4.4" height="8.8" fill="#FFFFFF"/>
<path d="M1224.2 746.6 H1227 L1231 742.8 V755.8 L1227 752.2 H1224.2 Z" fill="#FFFFFF"/>
<path d="M1233.4 746.4 Q1235.4 749.2 1233.4 752.2 M1235.6 744.4 Q1238.8 749.2 1235.6 754.2" stroke="#FFFFFF" stroke-width="1.1" fill="none"/>
<g fill="#FFFFFF"><rect x="1248.6" y="752.6" width="2" height="2"/><rect x="1251.8" y="750.4" width="2.2" height="4.2"/><rect x="1255" y="748" width="2.2" height="6.6"/><rect x="1258.2" y="745.6" width="2.2" height="9"/><rect x="1261.4" y="743" width="2.2" height="11.6"/></g>
</svg>
<div class="abs" id="clk" style="left:1262px;top:733px;width:100px;text-align:center;color:#fff;font-size:11.5px;letter-spacing:-0.6px;line-height:16px;white-space:nowrap;">12:53</div>
<div class="abs" id="dat" style="left:1261.5px;top:750px;width:100px;text-align:center;color:#fff;font-size:11.5px;letter-spacing:-0.04px;line-height:16px;white-space:nowrap;">14/06/2016</div>
</body>
</html>
